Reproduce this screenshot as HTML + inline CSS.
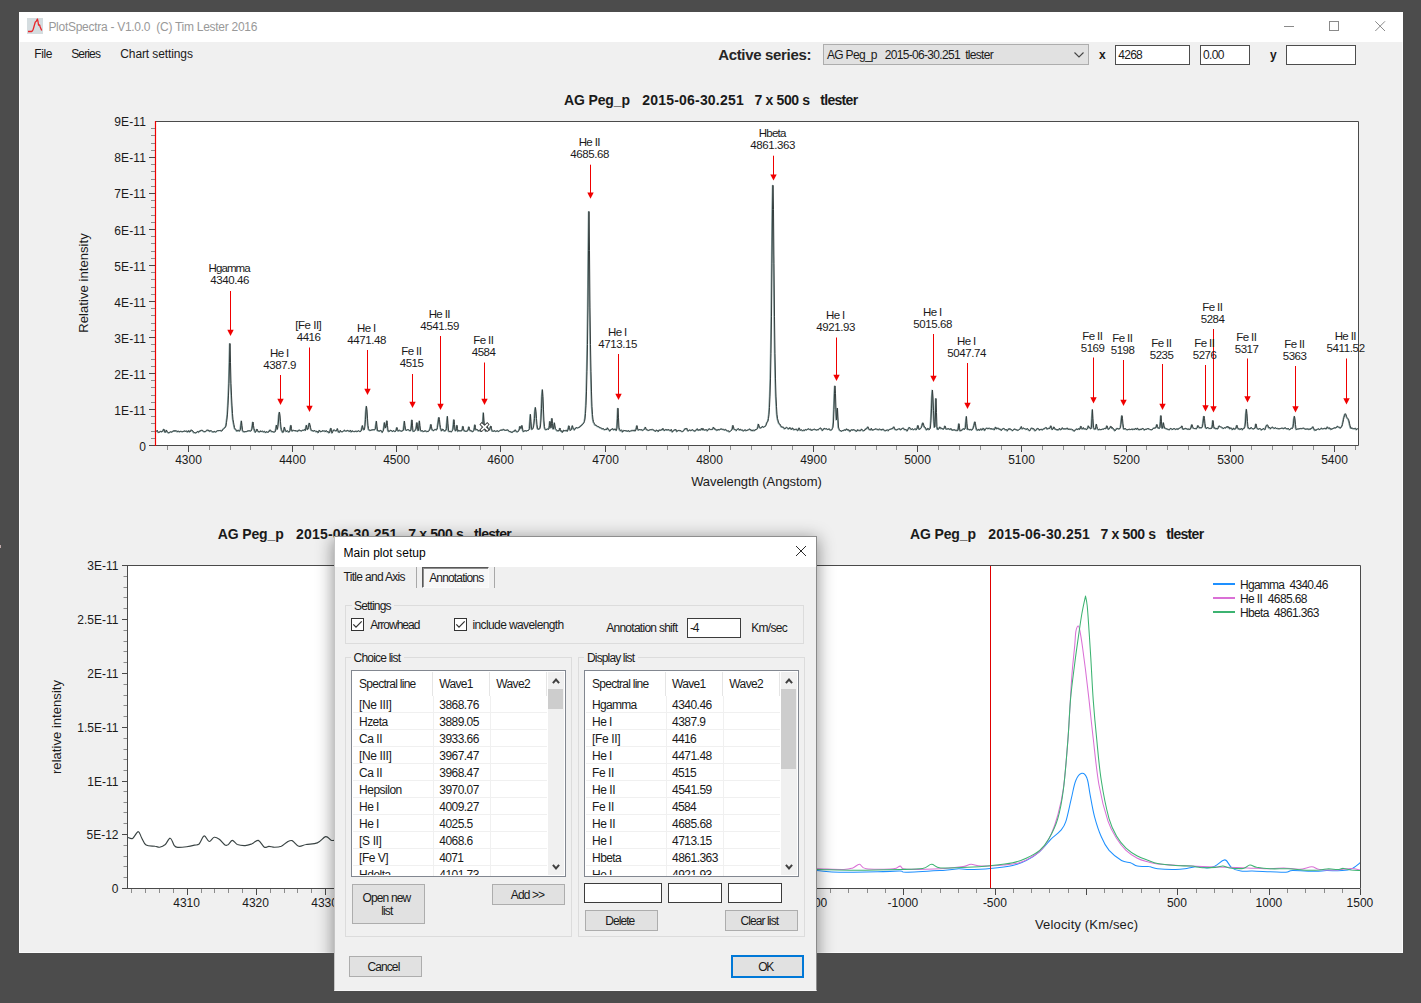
<!DOCTYPE html>
<html lang="en"><head><meta charset="utf-8"><title>PlotSpectra</title>
<style>
html,body{margin:0;padding:0}
body{width:1421px;height:1003px;position:relative;overflow:hidden;background:#4c4c4c;font-family:"Liberation Sans", sans-serif;color:#1a1a1a}
div,.abs{position:absolute}
.layer{left:0;top:0;width:1421px;height:1003px}
.t{position:absolute;white-space:pre;display:block}
svg{position:absolute;overflow:visible}
svg.chart{left:0;top:0;shape-rendering:auto}
</style></head>
<body>

<div class="layer" id="mainwin">
<div style="left:19px;top:12px;width:1384px;height:941px;background:#f0f0f0;border:1px solid #fafafa;border-top:0;box-sizing:border-box;"></div>
<div style="left:0px;top:545px;width:1px;height:3px;background:#bfa9a9;"></div>
<div style="left:19px;top:12px;width:1384px;height:30px;background:#fff;"></div>
<svg class="abs" style="left:27px;top:18px" width="16" height="16" viewBox="0 0 16 16"><rect width="16" height="16" fill="#d5dde0"/><path d="M1,13.5H4.5C6,13.3 6.3,11.5 7,8.5L8.3,4 9.3,3.3 10.4,1 11,3.5 11.5,7 12.6,6.8 13.2,9 14.7,12.5" fill="none" stroke="#e8262a" stroke-width="1.3" stroke-linejoin="round"/></svg>
<svg class="abs" style="left:1270px;top:12px" width="133" height="30" viewBox="1270 12 133 30" fill="none" stroke="#8a8a8a" stroke-width="1"><path d="M1284,26.5H1294"/><rect x="1329.5" y="21.5" width="9" height="9"/><path d="M1375.3,21.3L1385,31M1385,21.3L1375.3,31"/></svg>
<div style="left:823px;top:44px;width:266px;height:21px;background:#e1e1e1;border:1px solid #adadad;box-sizing:border-box;"></div>
<svg class="abs" style="left:1072px;top:49px" width="14" height="12" viewBox="0 0 14 12"><path d="M2.5,3.5L7,8L11.5,3.5" fill="none" stroke="#444" stroke-width="1.1"/></svg>
<div style="left:1115px;top:45px;width:75px;height:20px;background:#fff;border:1px solid #4d4d4d;box-sizing:border-box;"></div>
<div style="left:1200px;top:45px;width:50px;height:20px;background:#fff;border:1px solid #4d4d4d;box-sizing:border-box;"></div>
<div style="left:1286px;top:45px;width:70px;height:20px;background:#fff;border:1px solid #4d4d4d;box-sizing:border-box;"></div>
<span class="t" style="left:48.40px;top:20px;font-size:12px;line-height:15px;letter-spacing:-0.278px;color:#999999;">PlotSpectra - V1.0.0  (C) Tim Lester 2016</span>
<span class="t" style="left:34.30px;top:47px;font-size:12px;line-height:15px;letter-spacing:-0.415px;">File</span>
<span class="t" style="left:71.20px;top:47px;font-size:12px;line-height:15px;letter-spacing:-0.863px;">Series</span>
<span class="t" style="left:120.30px;top:47px;font-size:12px;line-height:15px;letter-spacing:-0.111px;">Chart settings</span>
<span class="t" style="left:718.20px;top:45px;font-size:15px;line-height:19px;font-weight:700;letter-spacing:-0.328px;color:#262626;">Active series:</span>
<span class="t" style="left:827.00px;top:48px;font-size:12px;line-height:15px;letter-spacing:-0.690px;">AG Peg_p   2015-06-30.251  tlester</span>
<span class="t" style="left:1099.00px;top:48px;font-size:12px;line-height:15px;font-weight:700;">x</span>
<span class="t" style="left:1270.00px;top:48px;font-size:12px;line-height:15px;font-weight:700;">y</span>
<span class="t" style="left:1118.30px;top:48px;font-size:12px;line-height:15px;letter-spacing:-0.734px;">4268</span>
<span class="t" style="left:1203.00px;top:48px;font-size:12px;line-height:15px;letter-spacing:-0.620px;">0.00</span>
<svg class="chart" width="1421" height="1003" viewBox="0 0 1421 1003">
<g id="mainplot"><rect x="155" y="121" width="1204" height="325" fill="#fff"/>
<path d="M149,445.5H155" stroke="#4a4a4a"/>
<path d="M151,438.5H155" stroke="#8c8c8c"/>
<path d="M151,431.5H155" stroke="#8c8c8c"/>
<path d="M151,423.5H155" stroke="#8c8c8c"/>
<path d="M151,416.5H155" stroke="#8c8c8c"/>
<path d="M149,409.5H155" stroke="#4a4a4a"/>
<path d="M151,402.5H155" stroke="#8c8c8c"/>
<path d="M151,395.5H155" stroke="#8c8c8c"/>
<path d="M151,387.5H155" stroke="#8c8c8c"/>
<path d="M151,380.5H155" stroke="#8c8c8c"/>
<path d="M149,373.5H155" stroke="#4a4a4a"/>
<path d="M151,366.5H155" stroke="#8c8c8c"/>
<path d="M151,359.5H155" stroke="#8c8c8c"/>
<path d="M151,351.5H155" stroke="#8c8c8c"/>
<path d="M151,344.5H155" stroke="#8c8c8c"/>
<path d="M149,337.5H155" stroke="#4a4a4a"/>
<path d="M151,330.5H155" stroke="#8c8c8c"/>
<path d="M151,323.5H155" stroke="#8c8c8c"/>
<path d="M151,315.5H155" stroke="#8c8c8c"/>
<path d="M151,308.5H155" stroke="#8c8c8c"/>
<path d="M149,301.5H155" stroke="#4a4a4a"/>
<path d="M151,294.5H155" stroke="#8c8c8c"/>
<path d="M151,287.5H155" stroke="#8c8c8c"/>
<path d="M151,279.5H155" stroke="#8c8c8c"/>
<path d="M151,272.5H155" stroke="#8c8c8c"/>
<path d="M149,265.5H155" stroke="#4a4a4a"/>
<path d="M151,258.5H155" stroke="#8c8c8c"/>
<path d="M151,251.5H155" stroke="#8c8c8c"/>
<path d="M151,243.5H155" stroke="#8c8c8c"/>
<path d="M151,236.5H155" stroke="#8c8c8c"/>
<path d="M149,229.5H155" stroke="#4a4a4a"/>
<path d="M151,222.5H155" stroke="#8c8c8c"/>
<path d="M151,215.5H155" stroke="#8c8c8c"/>
<path d="M151,207.5H155" stroke="#8c8c8c"/>
<path d="M151,200.5H155" stroke="#8c8c8c"/>
<path d="M149,193.5H155" stroke="#4a4a4a"/>
<path d="M151,186.5H155" stroke="#8c8c8c"/>
<path d="M151,179.5H155" stroke="#8c8c8c"/>
<path d="M151,171.5H155" stroke="#8c8c8c"/>
<path d="M151,164.5H155" stroke="#8c8c8c"/>
<path d="M149,157.5H155" stroke="#4a4a4a"/>
<path d="M151,150.5H155" stroke="#8c8c8c"/>
<path d="M151,143.5H155" stroke="#8c8c8c"/>
<path d="M151,135.5H155" stroke="#8c8c8c"/>
<path d="M151,128.5H155" stroke="#8c8c8c"/>
<path d="M167.5,446V450" stroke="#8c8c8c"/>
<path d="M188.5,446V452" stroke="#4a4a4a"/>
<path d="M209.5,446V450" stroke="#8c8c8c"/>
<path d="M230.5,446V450" stroke="#8c8c8c"/>
<path d="M250.5,446V450" stroke="#8c8c8c"/>
<path d="M271.5,446V450" stroke="#8c8c8c"/>
<path d="M292.5,446V452" stroke="#4a4a4a"/>
<path d="M313.5,446V450" stroke="#8c8c8c"/>
<path d="M334.5,446V450" stroke="#8c8c8c"/>
<path d="M355.5,446V450" stroke="#8c8c8c"/>
<path d="M375.5,446V450" stroke="#8c8c8c"/>
<path d="M396.5,446V452" stroke="#4a4a4a"/>
<path d="M417.5,446V450" stroke="#8c8c8c"/>
<path d="M438.5,446V450" stroke="#8c8c8c"/>
<path d="M459.5,446V450" stroke="#8c8c8c"/>
<path d="M480.5,446V450" stroke="#8c8c8c"/>
<path d="M500.5,446V452" stroke="#4a4a4a"/>
<path d="M521.5,446V450" stroke="#8c8c8c"/>
<path d="M542.5,446V450" stroke="#8c8c8c"/>
<path d="M563.5,446V450" stroke="#8c8c8c"/>
<path d="M584.5,446V450" stroke="#8c8c8c"/>
<path d="M605.5,446V452" stroke="#4a4a4a"/>
<path d="M625.5,446V450" stroke="#8c8c8c"/>
<path d="M646.5,446V450" stroke="#8c8c8c"/>
<path d="M667.5,446V450" stroke="#8c8c8c"/>
<path d="M688.5,446V450" stroke="#8c8c8c"/>
<path d="M709.5,446V452" stroke="#4a4a4a"/>
<path d="M730.5,446V450" stroke="#8c8c8c"/>
<path d="M751.5,446V450" stroke="#8c8c8c"/>
<path d="M771.5,446V450" stroke="#8c8c8c"/>
<path d="M792.5,446V450" stroke="#8c8c8c"/>
<path d="M813.5,446V452" stroke="#4a4a4a"/>
<path d="M834.5,446V450" stroke="#8c8c8c"/>
<path d="M855.5,446V450" stroke="#8c8c8c"/>
<path d="M876.5,446V450" stroke="#8c8c8c"/>
<path d="M896.5,446V450" stroke="#8c8c8c"/>
<path d="M917.5,446V452" stroke="#4a4a4a"/>
<path d="M938.5,446V450" stroke="#8c8c8c"/>
<path d="M959.5,446V450" stroke="#8c8c8c"/>
<path d="M980.5,446V450" stroke="#8c8c8c"/>
<path d="M1001.5,446V450" stroke="#8c8c8c"/>
<path d="M1021.5,446V452" stroke="#4a4a4a"/>
<path d="M1042.5,446V450" stroke="#8c8c8c"/>
<path d="M1063.5,446V450" stroke="#8c8c8c"/>
<path d="M1084.5,446V450" stroke="#8c8c8c"/>
<path d="M1105.5,446V450" stroke="#8c8c8c"/>
<path d="M1126.5,446V452" stroke="#4a4a4a"/>
<path d="M1146.5,446V450" stroke="#8c8c8c"/>
<path d="M1167.5,446V450" stroke="#8c8c8c"/>
<path d="M1188.5,446V450" stroke="#8c8c8c"/>
<path d="M1209.5,446V450" stroke="#8c8c8c"/>
<path d="M1230.5,446V452" stroke="#4a4a4a"/>
<path d="M1251.5,446V450" stroke="#8c8c8c"/>
<path d="M1272.5,446V450" stroke="#8c8c8c"/>
<path d="M1292.5,446V450" stroke="#8c8c8c"/>
<path d="M1313.5,446V450" stroke="#8c8c8c"/>
<path d="M1334.5,446V452" stroke="#4a4a4a"/>
<path d="M1355.5,446V450" stroke="#8c8c8c"/>
<path d="M155.0,431.1 155.5,431.4 156.0,431.4 156.5,431.2 157.0,430.7 157.5,430.5 158.0,431.8 158.5,432.4 159.0,432.3 159.5,432.1 160.0,431.9 160.5,431.4 161.0,431.1 161.5,431.6 162.0,431.9 162.5,431.3 163.0,430.6 163.5,429.7 164.0,429.1 164.5,430.9 165.0,432.1 165.5,432.2 166.0,431.4 166.5,430.0 167.0,431.3 167.5,432.0 168.0,432.1 168.5,432.7 169.0,433.0 169.5,432.7 170.0,432.2 170.5,431.7 171.0,431.8 171.5,432.0 172.0,432.1 172.5,431.8 173.0,431.2 173.5,430.8 174.0,431.1 174.5,431.1 175.0,430.4 175.5,430.9 176.0,431.1 176.5,430.8 177.0,431.4 177.5,431.7 178.0,431.0 178.5,431.2 179.0,431.5 179.5,431.6 180.0,431.9 180.5,431.4 181.0,431.0 181.5,431.4 182.0,431.6 182.5,431.6 183.0,431.7 183.5,431.5 184.0,431.0 184.5,430.9 185.0,431.2 185.5,431.3 186.0,431.1 186.5,431.0 187.0,431.1 187.5,431.8 188.0,431.9 188.5,430.9 189.0,430.6 189.5,431.5 190.0,432.0 190.5,431.4 191.0,430.1 191.5,429.9 192.0,430.6 192.5,430.6 193.0,431.0 193.5,432.0 194.0,432.6 194.5,432.5 195.0,432.6 195.5,432.8 196.0,432.9 196.5,432.6 197.0,432.2 197.5,431.6 198.0,431.3 198.5,431.9 199.0,432.3 199.5,431.5 200.0,430.7 200.5,430.8 201.0,430.8 201.5,430.2 202.0,430.3 202.5,430.4 203.0,430.6 203.5,431.3 204.0,431.6 204.5,431.5 205.0,431.9 205.5,431.6 206.0,431.2 206.5,430.9 207.0,430.2 207.5,429.9 208.0,430.5 208.5,430.3 209.0,430.3 209.5,431.1 210.0,431.4 210.5,430.8 211.0,430.4 211.5,430.9 212.0,431.3 212.5,431.7 213.0,432.0 213.5,431.8 214.0,431.8 214.5,431.4 215.0,431.5 215.5,432.0 216.0,432.1 216.5,431.7 217.0,431.1 217.5,430.6 218.0,430.6 218.5,430.6 219.0,430.4 219.5,430.5 220.0,430.5 220.5,430.4 221.0,430.6 221.5,430.9 222.0,431.0 222.5,430.4 223.0,429.3 223.5,428.8 224.0,428.6 224.5,428.2 225.0,427.3 225.5,427.1 226.0,426.0 226.5,422.7 227.0,419.0 227.5,414.1 228.0,405.9 228.5,395.1 229.0,383.4 229.5,362.3 230.0,343.5 230.5,362.3 231.0,383.4 231.5,395.1 232.0,405.1 232.5,413.5 233.0,419.3 233.5,422.1 234.0,424.7 234.5,427.4 235.0,428.9 235.5,429.0 236.0,429.6 236.5,430.5 237.0,431.1 237.5,430.9 238.0,430.1 238.5,430.1 239.0,430.6 239.5,431.1 240.0,430.7 240.5,429.4 241.0,425.2 241.5,420.9 242.0,425.4 242.5,429.8 243.0,431.1 243.5,431.7 244.0,431.6 244.5,431.7 245.0,431.9 245.5,431.5 246.0,431.4 246.5,431.6 247.0,431.3 247.5,431.0 248.0,431.2 248.5,430.8 249.0,430.6 249.5,430.7 250.0,430.8 250.5,431.0 251.0,430.9 251.5,430.5 252.0,428.9 252.5,425.1 253.0,422.0 253.5,425.4 254.0,428.4 254.5,430.2 255.0,431.7 255.5,432.1 256.0,431.7 256.5,430.4 257.0,429.1 257.5,429.9 258.0,431.3 258.5,431.6 259.0,431.4 259.5,431.9 260.0,432.0 260.5,431.1 261.0,430.8 261.5,431.5 262.0,431.4 262.5,431.1 263.0,431.4 263.5,431.8 264.0,431.7 264.5,431.3 265.0,431.7 265.5,432.4 266.0,432.3 266.5,431.7 267.0,431.7 267.5,432.3 268.0,432.0 268.5,431.9 269.0,431.9 269.5,430.8 270.0,429.9 270.5,430.1 271.0,430.6 271.5,431.4 272.0,431.7 272.5,431.5 273.0,431.6 273.5,431.9 274.0,431.9 274.5,431.9 275.0,431.7 275.5,431.4 276.0,428.7 276.5,425.2 277.0,427.4 277.5,429.3 278.0,426.6 278.5,421.0 279.0,414.8 279.5,412.1 280.0,415.1 280.5,421.7 281.0,427.1 281.5,429.7 282.0,430.8 282.5,431.8 283.0,432.4 283.5,431.8 284.0,429.4 284.5,427.1 285.0,428.9 285.5,430.7 286.0,431.4 286.5,431.5 287.0,430.8 287.5,430.7 288.0,431.4 288.5,431.8 289.0,431.8 289.5,431.9 290.0,430.8 290.5,427.2 291.0,425.3 291.5,428.4 292.0,431.0 292.5,430.9 293.0,430.5 293.5,430.3 294.0,430.4 294.5,430.5 295.0,430.7 295.5,430.7 296.0,430.5 296.5,431.0 297.0,431.0 297.5,431.0 298.0,431.4 298.5,430.9 299.0,429.9 299.5,430.1 300.0,430.5 300.5,430.5 301.0,430.8 301.5,430.9 302.0,430.7 302.5,430.3 303.0,430.0 303.5,430.4 304.0,429.9 304.5,429.5 305.0,430.2 305.5,430.4 306.0,427.5 306.5,425.3 307.0,427.8 307.5,429.4 308.0,429.3 308.5,427.6 309.0,424.2 309.5,423.0 310.0,424.8 310.5,427.2 311.0,429.3 311.5,430.3 312.0,430.3 312.5,430.5 313.0,431.0 313.5,431.1 314.0,430.7 314.5,430.5 315.0,430.5 315.5,431.0 316.0,431.6 316.5,431.4 317.0,431.0 317.5,431.7 318.0,432.6 318.5,432.4 319.0,431.1 319.5,430.2 320.0,430.7 320.5,431.5 321.0,431.8 321.5,431.5 322.0,431.2 322.5,430.9 323.0,430.5 323.5,431.0 324.0,431.0 324.5,430.8 325.0,431.4 325.5,431.5 326.0,430.7 326.5,430.7 327.0,431.4 327.5,431.6 328.0,431.4 328.5,431.8 329.0,432.8 329.5,432.6 330.0,431.2 330.5,429.3 331.0,428.2 331.5,430.8 332.0,432.9 332.5,432.7 333.0,431.4 333.5,430.1 334.0,429.8 334.5,430.0 335.0,430.3 335.5,430.7 336.0,430.7 336.5,430.9 337.0,429.8 337.5,428.6 338.0,430.3 338.5,431.8 339.0,432.1 339.5,432.3 340.0,431.7 340.5,430.4 341.0,431.1 341.5,431.7 342.0,431.7 342.5,431.7 343.0,431.4 343.5,431.2 344.0,430.6 344.5,430.2 345.0,430.5 345.5,431.1 346.0,431.0 346.5,430.9 347.0,430.9 347.5,430.4 348.0,430.3 348.5,430.8 349.0,431.2 349.5,431.4 350.0,430.9 350.5,430.2 351.0,431.0 351.5,432.0 352.0,431.5 352.5,430.8 353.0,430.9 353.5,431.4 354.0,431.5 354.5,431.4 355.0,431.6 355.5,431.3 356.0,431.0 356.5,431.2 357.0,431.6 357.5,431.5 358.0,431.1 358.5,430.6 359.0,430.9 359.5,431.3 360.0,431.5 360.5,431.4 361.0,431.2 361.5,430.2 362.0,427.7 362.5,425.6 363.0,427.8 363.5,429.3 364.0,429.9 364.5,429.5 365.0,426.2 365.5,419.4 366.0,411.1 366.5,406.3 367.0,409.8 367.5,418.2 368.0,425.2 368.5,428.7 369.0,429.8 369.5,430.1 370.0,430.5 370.5,430.4 371.0,430.2 371.5,430.0 372.0,429.9 372.5,429.8 373.0,429.5 373.5,429.6 374.0,429.8 374.5,429.7 375.0,429.6 375.5,428.8 376.0,424.9 376.5,421.2 377.0,426.1 377.5,430.5 378.0,430.7 378.5,430.6 379.0,431.2 379.5,431.2 380.0,430.5 380.5,430.4 381.0,430.4 381.5,430.8 382.0,431.9 382.5,432.3 383.0,431.1 383.5,430.5 384.0,427.1 384.5,422.6 385.0,425.1 385.5,427.9 386.0,426.9 386.5,423.9 387.0,420.8 387.5,425.5 388.0,430.0 388.5,431.2 389.0,431.6 389.5,431.3 390.0,430.6 390.5,430.3 391.0,430.4 391.5,430.5 392.0,431.0 392.5,431.4 393.0,431.2 393.5,430.6 394.0,430.7 394.5,431.3 395.0,431.5 395.5,431.4 396.0,430.9 396.5,429.1 397.0,427.5 397.5,429.3 398.0,430.8 398.5,430.9 399.0,430.5 399.5,430.0 400.0,430.4 400.5,430.9 401.0,430.8 401.5,431.1 402.0,431.1 402.5,430.7 403.0,430.7 403.5,430.2 404.0,425.9 404.5,421.2 405.0,425.4 405.5,429.4 406.0,430.1 406.5,430.2 407.0,430.2 407.5,429.7 408.0,429.5 408.5,429.6 409.0,430.1 409.5,430.4 410.0,430.7 410.5,430.8 411.0,430.0 411.5,425.0 412.0,419.9 412.5,425.2 413.0,430.6 413.5,431.3 414.0,431.2 414.5,431.2 415.0,430.7 415.5,429.7 416.0,429.1 416.5,425.9 417.0,422.6 417.5,426.8 418.0,430.5 418.5,430.4 419.0,425.8 419.5,420.9 420.0,425.6 420.5,430.1 421.0,430.8 421.5,430.8 422.0,430.9 422.5,430.7 423.0,431.1 423.5,431.7 424.0,431.1 424.5,431.0 425.0,431.2 425.5,430.9 426.0,430.7 426.5,431.1 427.0,431.6 427.5,431.5 428.0,431.1 428.5,431.3 429.0,430.8 429.5,430.1 430.0,429.1 430.5,426.8 431.0,424.4 431.5,426.8 432.0,429.2 432.5,430.0 433.0,430.1 433.5,430.5 434.0,430.6 434.5,429.8 435.0,429.3 435.5,429.4 436.0,429.6 436.5,429.8 437.0,429.6 437.5,427.7 438.0,424.0 438.5,419.8 439.0,417.4 439.5,419.6 440.0,424.3 440.5,427.5 441.0,429.2 441.5,430.6 442.0,430.7 442.5,429.4 443.0,429.0 443.5,429.7 444.0,430.6 444.5,430.8 445.0,430.8 445.5,430.8 446.0,430.3 446.5,428.6 447.0,422.7 447.5,416.4 448.0,423.3 448.5,430.2 449.0,431.5 449.5,431.4 450.0,431.4 450.5,431.3 451.0,431.4 451.5,431.7 452.0,431.4 452.5,430.6 453.0,429.3 453.5,424.4 454.0,419.7 454.5,424.5 455.0,429.4 455.5,430.6 456.0,430.8 456.5,428.4 457.0,425.3 457.5,428.5 458.0,431.3 458.5,430.6 459.0,430.3 459.5,430.7 460.0,430.8 460.5,430.8 461.0,430.7 461.5,430.7 462.0,430.6 462.5,428.6 463.0,426.3 463.5,428.2 464.0,430.5 464.5,430.7 465.0,431.0 465.5,431.2 466.0,431.1 466.5,431.2 467.0,431.2 467.5,430.8 468.0,430.5 468.5,428.6 469.0,426.8 469.5,428.7 470.0,430.5 470.5,430.6 471.0,430.8 471.5,431.0 472.0,430.8 472.5,431.4 473.0,431.7 473.5,431.1 474.0,430.3 474.5,427.5 475.0,424.8 475.5,427.7 476.0,429.8 476.5,429.2 477.0,429.7 477.5,429.8 478.0,429.9 478.5,430.8 479.0,430.9 479.5,430.3 480.0,430.8 480.5,431.1 481.0,431.3 481.5,431.1 482.0,430.7 482.5,429.8 483.0,421.9 483.5,412.8 484.0,420.1 484.5,427.8 485.0,429.3 485.5,430.5 486.0,431.3 486.5,430.8 487.0,428.6 487.5,426.6 488.0,428.1 488.5,429.9 489.0,430.4 489.5,429.9 490.0,428.5 490.5,427.0 491.0,426.0 491.5,428.3 492.0,430.3 492.5,431.1 493.0,431.2 493.5,431.2 494.0,431.0 494.5,430.7 495.0,430.7 495.5,431.3 496.0,431.5 496.5,431.1 497.0,431.0 497.5,430.8 498.0,430.9 498.5,431.4 499.0,431.4 499.5,430.8 500.0,430.5 500.5,430.3 501.0,429.9 501.5,430.0 502.0,430.2 502.5,430.1 503.0,429.5 503.5,429.2 504.0,429.8 504.5,430.0 505.0,430.0 505.5,430.3 506.0,430.1 506.5,430.1 507.0,430.2 507.5,429.9 508.0,429.8 508.5,430.2 509.0,431.1 509.5,431.5 510.0,431.5 510.5,431.4 511.0,431.9 511.5,432.2 512.0,432.1 512.5,432.3 513.0,431.7 513.5,431.2 514.0,431.4 514.5,431.2 515.0,430.1 515.5,429.9 516.0,430.8 516.5,431.4 517.0,431.7 517.5,432.0 518.0,431.4 518.5,431.0 519.0,430.7 519.5,428.7 520.0,426.4 520.5,427.7 521.0,428.5 521.5,426.6 522.0,425.5 522.5,427.9 523.0,430.6 523.5,431.6 524.0,431.2 524.5,430.9 525.0,430.9 525.5,430.6 526.0,430.7 526.5,431.0 527.0,430.8 527.5,430.5 528.0,430.5 528.5,430.4 529.0,429.9 529.5,428.7 530.0,421.9 530.5,414.4 531.0,421.2 531.5,428.5 532.0,429.4 532.5,428.8 533.0,428.7 533.5,427.3 534.0,424.0 534.5,418.6 535.0,411.2 535.5,407.5 536.0,411.2 536.5,418.5 537.0,424.5 537.5,428.1 538.0,429.1 538.5,429.1 539.0,429.1 539.5,429.0 540.0,428.3 540.5,426.0 541.0,420.1 541.5,408.8 542.0,396.4 542.5,389.7 543.0,396.4 543.5,409.9 544.0,420.9 544.5,426.7 545.0,428.7 545.5,429.4 546.0,429.8 546.5,429.6 547.0,429.3 547.5,428.8 548.0,429.0 548.5,429.3 549.0,429.0 549.5,425.5 550.0,421.4 550.5,424.7 551.0,427.8 551.5,423.6 552.0,418.4 552.5,423.6 553.0,428.8 553.5,429.0 554.0,425.9 554.5,422.8 555.0,426.0 555.5,428.8 556.0,429.4 556.5,429.8 557.0,430.3 557.5,430.9 558.0,430.7 558.5,430.6 559.0,430.9 559.5,429.8 560.0,428.1 560.5,429.6 561.0,431.2 561.5,431.0 562.0,431.1 562.5,432.3 563.0,431.9 563.5,430.3 564.0,430.1 564.5,430.6 565.0,430.6 565.5,430.7 566.0,430.3 566.5,430.2 567.0,431.0 567.5,431.2 568.0,429.9 568.5,427.8 569.0,425.8 569.5,427.5 570.0,429.7 570.5,430.3 571.0,430.1 571.5,429.3 572.0,427.3 572.5,425.7 573.0,427.3 573.5,428.8 574.0,429.4 574.5,429.8 575.0,429.5 575.5,428.1 576.0,428.0 576.5,427.6 577.0,427.5 577.5,428.0 578.0,427.9 578.5,427.6 579.0,427.4 579.5,427.0 580.0,427.1 580.5,426.4 581.0,425.5 581.5,425.7 582.0,425.2 582.5,424.1 583.0,423.9 583.5,423.6 584.0,422.7 584.5,421.6 585.0,419.0 585.5,413.6 586.0,405.8 586.5,391.9 587.0,371.3 587.5,344.5 588.0,307.9 588.5,250.3 589.0,211.5 589.5,250.3 590.0,307.9 590.5,344.5 591.0,371.3 591.5,391.9 592.0,406.6 592.5,414.6 593.0,419.2 593.5,421.7 594.0,422.7 594.5,423.5 595.0,424.7 595.5,425.1 596.0,425.1 596.5,425.3 597.0,425.8 597.5,426.4 598.0,426.5 598.5,426.5 599.0,427.0 599.5,427.3 600.0,427.3 600.5,427.8 601.0,427.8 601.5,428.0 602.0,428.7 602.5,428.8 603.0,428.6 603.5,428.6 604.0,429.1 604.5,429.7 605.0,429.7 605.5,429.4 606.0,429.1 606.5,429.5 607.0,429.2 607.5,427.9 608.0,428.3 608.5,429.4 609.0,429.6 609.5,430.1 610.0,431.1 610.5,430.3 611.0,429.4 611.5,429.4 612.0,429.2 612.5,428.9 613.0,428.6 613.5,429.3 614.0,430.0 614.5,429.4 615.0,428.8 615.5,429.2 616.0,430.2 616.5,430.3 617.0,428.2 617.5,418.3 618.0,408.2 618.5,417.8 619.0,427.2 619.5,429.4 620.0,430.3 620.5,430.7 621.0,430.3 621.5,429.8 622.0,430.5 622.5,431.8 623.0,431.8 623.5,430.8 624.0,430.2 624.5,430.5 625.0,430.5 625.5,430.6 626.0,430.8 626.5,430.8 627.0,430.9 627.5,431.1 628.0,431.1 628.5,430.7 629.0,430.7 629.5,431.4 630.0,431.4 630.5,430.9 631.0,431.0 631.5,430.9 632.0,430.3 632.5,430.2 633.0,430.7 633.5,430.7 634.0,430.1 634.5,430.0 635.0,430.9 635.5,430.8 636.0,429.7 636.5,427.7 637.0,425.6 637.5,427.9 638.0,429.7 638.5,430.0 639.0,429.9 639.5,429.5 640.0,429.5 640.5,429.7 641.0,429.7 641.5,429.7 642.0,429.7 642.5,430.2 643.0,430.5 643.5,430.0 644.0,429.3 644.5,429.2 645.0,428.4 645.5,427.1 646.0,428.4 646.5,429.5 647.0,429.6 647.5,429.9 648.0,430.2 648.5,430.4 649.0,430.3 649.5,430.0 650.0,429.7 650.5,429.6 651.0,429.6 651.5,429.7 652.0,429.5 652.5,429.2 653.0,429.7 653.5,430.0 654.0,430.0 654.5,430.4 655.0,430.8 655.5,431.2 656.0,431.1 656.5,430.2 657.0,429.9 657.5,430.4 658.0,431.3 658.5,431.4 659.0,430.1 659.5,430.0 660.0,430.4 660.5,430.3 661.0,429.9 661.5,429.6 662.0,430.0 662.5,429.5 663.0,428.4 663.5,429.2 664.0,430.2 664.5,430.4 665.0,430.4 665.5,429.7 666.0,429.2 666.5,429.6 667.0,430.2 667.5,430.0 668.0,429.5 668.5,429.6 669.0,429.9 669.5,430.0 670.0,430.5 670.5,430.7 671.0,429.7 671.5,429.6 672.0,430.9 672.5,431.9 673.0,431.6 673.5,430.9 674.0,430.1 674.5,429.9 675.0,430.0 675.5,429.7 676.0,429.4 676.5,430.4 677.0,431.6 677.5,431.0 678.0,430.4 678.5,430.4 679.0,430.4 679.5,430.4 680.0,430.6 680.5,430.5 681.0,430.6 681.5,431.3 682.0,431.5 682.5,431.6 683.0,431.3 683.5,430.9 684.0,430.6 684.5,429.7 685.0,428.6 685.5,428.6 686.0,429.0 686.5,428.7 687.0,428.3 687.5,429.7 688.0,430.9 688.5,430.8 689.0,430.4 689.5,430.1 690.0,429.9 690.5,430.3 691.0,430.6 691.5,430.4 692.0,429.8 692.5,429.6 693.0,430.1 693.5,430.3 694.0,430.7 694.5,430.9 695.0,431.3 695.5,431.0 696.0,430.3 696.5,429.6 697.0,429.0 697.5,428.8 698.0,430.0 698.5,430.3 699.0,429.7 699.5,429.7 700.0,429.9 700.5,430.2 701.0,429.6 701.5,428.5 702.0,429.4 702.5,429.7 703.0,428.3 703.5,429.5 704.0,430.0 704.5,430.0 705.0,429.9 705.5,429.8 706.0,429.7 706.5,429.6 707.0,430.1 707.5,430.8 708.0,430.4 708.5,429.4 709.0,428.8 709.5,428.9 710.0,429.1 710.5,429.4 711.0,429.4 711.5,429.4 712.0,429.5 712.5,429.4 713.0,428.5 713.5,427.2 714.0,427.7 714.5,428.9 715.0,429.3 715.5,429.1 716.0,429.3 716.5,430.1 717.0,430.5 717.5,430.2 718.0,429.4 718.5,429.4 719.0,430.0 719.5,430.0 720.0,429.4 720.5,429.1 721.0,429.0 721.5,428.9 722.0,429.1 722.5,429.3 723.0,429.4 723.5,429.3 724.0,429.6 724.5,430.0 725.0,429.6 725.5,429.3 726.0,429.9 726.5,430.2 727.0,430.4 727.5,431.0 728.0,431.0 728.5,430.8 729.0,431.2 729.5,431.8 730.0,431.6 730.5,431.0 731.0,430.6 731.5,430.3 732.0,429.9 732.5,428.0 733.0,425.4 733.5,426.6 734.0,428.7 734.5,429.4 735.0,429.5 735.5,429.6 736.0,430.2 736.5,430.6 737.0,429.8 737.5,429.2 738.0,428.9 738.5,428.6 739.0,429.1 739.5,430.0 740.0,429.9 740.5,429.2 741.0,429.5 741.5,430.1 742.0,430.0 742.5,430.0 743.0,430.4 743.5,430.9 744.0,430.9 744.5,430.3 745.0,429.6 745.5,429.9 746.0,430.6 746.5,430.6 747.0,430.1 747.5,430.1 748.0,430.2 748.5,429.9 749.0,429.4 749.5,429.1 750.0,429.0 750.5,429.4 751.0,430.3 751.5,430.3 752.0,430.0 752.5,430.7 753.0,430.4 753.5,429.8 754.0,430.4 754.5,430.9 755.0,430.4 755.5,429.5 756.0,429.4 756.5,429.4 757.0,429.1 757.5,428.7 758.0,426.7 758.5,424.0 759.0,425.4 759.5,427.3 760.0,427.9 760.5,427.9 761.0,427.9 761.5,427.7 762.0,427.1 762.5,426.4 763.0,426.6 763.5,427.2 764.0,427.2 764.5,426.6 765.0,426.4 765.5,426.2 766.0,425.3 766.5,424.2 767.0,422.6 767.5,422.0 768.0,421.0 768.5,418.5 769.0,414.8 769.5,407.5 770.0,396.1 770.5,378.9 771.0,353.7 771.5,316.2 772.0,263.8 772.5,209.7 773.0,185.3 773.5,209.7 774.0,263.8 774.5,316.2 775.0,353.7 775.5,378.9 776.0,396.1 776.5,406.3 777.0,414.2 777.5,418.3 778.0,420.1 778.5,421.9 779.0,423.4 779.5,423.8 780.0,424.1 780.5,425.1 781.0,426.0 781.5,426.8 782.0,427.0 782.5,427.1 783.0,426.9 783.5,427.1 784.0,427.9 784.5,428.6 785.0,428.8 785.5,428.5 786.0,427.7 786.5,427.3 787.0,427.6 787.5,427.8 788.0,428.3 788.5,428.9 789.0,429.0 789.5,428.2 790.0,427.5 790.5,428.2 791.0,429.0 791.5,429.3 792.0,429.0 792.5,428.0 793.0,428.2 793.5,429.2 794.0,429.8 794.5,429.6 795.0,429.3 795.5,429.3 796.0,429.5 796.5,429.2 797.0,429.5 797.5,430.3 798.0,430.6 798.5,429.7 799.0,427.9 799.5,428.2 800.0,429.6 800.5,430.3 801.0,429.9 801.5,429.6 802.0,430.2 802.5,430.7 803.0,430.5 803.5,430.1 804.0,430.2 804.5,430.6 805.0,430.0 805.5,429.4 806.0,429.8 806.5,429.9 807.0,429.7 807.5,429.4 808.0,429.0 808.5,428.8 809.0,428.9 809.5,429.4 810.0,429.4 810.5,429.0 811.0,429.8 811.5,430.2 812.0,429.8 812.5,429.9 813.0,430.0 813.5,429.6 814.0,429.1 814.5,429.1 815.0,429.5 815.5,429.5 816.0,429.9 816.5,430.0 817.0,429.9 817.5,429.7 818.0,429.5 818.5,429.7 819.0,429.3 819.5,428.6 820.0,428.3 820.5,428.0 821.0,428.1 821.5,429.1 822.0,429.6 822.5,430.4 823.0,430.3 823.5,429.3 824.0,428.5 824.5,428.4 825.0,428.5 825.5,429.0 826.0,428.7 826.5,428.6 827.0,429.0 827.5,429.4 828.0,429.5 828.5,429.2 829.0,428.9 829.5,429.0 830.0,429.4 830.5,430.1 831.0,430.3 831.5,430.0 832.0,429.5 832.5,428.6 833.0,427.3 833.5,422.0 834.0,409.6 834.5,393.7 835.0,385.9 835.5,393.7 836.0,409.2 836.5,419.8 837.0,416.3 837.5,408.2 838.0,418.0 838.5,427.0 839.0,428.5 839.5,429.6 840.0,430.5 840.5,430.5 841.0,430.8 841.5,431.2 842.0,430.9 842.5,430.5 843.0,430.7 843.5,430.6 844.0,430.0 844.5,429.8 845.0,429.9 845.5,430.1 846.0,430.1 846.5,429.1 847.0,428.8 847.5,429.5 848.0,430.2 848.5,430.0 849.0,429.7 849.5,430.5 850.0,431.5 850.5,431.1 851.0,430.2 851.5,429.7 852.0,429.7 852.5,430.0 853.0,430.1 853.5,429.7 854.0,429.5 854.5,429.9 855.0,430.2 855.5,430.4 856.0,430.8 856.5,431.3 857.0,431.1 857.5,430.0 858.0,429.6 858.5,430.3 859.0,430.3 859.5,430.3 860.0,430.7 860.5,430.7 861.0,430.1 861.5,429.2 862.0,429.2 862.5,429.8 863.0,430.6 863.5,430.9 864.0,430.4 864.5,430.4 865.0,430.2 865.5,429.0 866.0,428.7 866.5,428.7 867.0,428.4 867.5,427.4 868.0,426.8 868.5,428.1 869.0,429.2 869.5,429.4 870.0,429.8 870.5,430.0 871.0,429.2 871.5,428.4 872.0,429.8 872.5,430.0 873.0,429.7 873.5,429.8 874.0,429.7 874.5,429.5 875.0,429.2 875.5,429.0 876.0,428.6 876.5,428.9 877.0,429.4 877.5,429.3 878.0,429.6 878.5,429.8 879.0,429.4 879.5,429.0 880.0,429.4 880.5,429.7 881.0,429.2 881.5,429.5 882.0,430.1 882.5,429.6 883.0,428.9 883.5,429.3 884.0,429.9 884.5,430.3 885.0,430.7 885.5,430.7 886.0,430.3 886.5,430.3 887.0,430.2 887.5,429.7 888.0,430.4 888.5,430.7 889.0,429.8 889.5,429.4 890.0,429.5 890.5,429.2 891.0,429.1 891.5,428.7 892.0,428.9 892.5,428.7 893.0,428.1 893.5,427.3 894.0,426.8 894.5,428.4 895.0,429.3 895.5,429.3 896.0,429.7 896.5,429.8 897.0,429.7 897.5,429.6 898.0,429.3 898.5,428.8 899.0,429.0 899.5,429.0 900.0,428.7 900.5,429.2 901.0,429.9 901.5,429.2 902.0,428.5 902.5,428.4 903.0,428.2 903.5,428.0 904.0,428.7 904.5,429.5 905.0,429.7 905.5,429.5 906.0,429.3 906.5,429.8 907.0,430.8 907.5,430.8 908.0,429.6 908.5,428.6 909.0,427.8 909.5,427.2 910.0,427.8 910.5,428.9 911.0,429.4 911.5,429.4 912.0,429.0 912.5,428.7 913.0,429.1 913.5,429.7 914.0,429.6 914.5,429.2 915.0,428.7 915.5,428.9 916.0,429.6 916.5,429.6 917.0,428.9 917.5,427.2 918.0,425.4 918.5,427.1 919.0,429.1 919.5,429.2 920.0,429.1 920.5,428.7 921.0,428.0 921.5,427.5 922.0,425.8 922.5,423.6 923.0,422.8 923.5,423.9 924.0,425.8 924.5,427.1 925.0,427.0 925.5,427.7 926.0,429.0 926.5,429.7 927.0,429.8 927.5,429.2 928.0,428.2 928.5,429.2 929.0,429.6 929.5,429.5 930.0,429.0 930.5,427.0 931.0,420.8 931.5,408.9 932.0,397.0 932.5,390.0 933.0,397.0 933.5,410.4 934.0,421.4 934.5,427.2 935.0,426.9 935.5,413.0 936.0,398.5 936.5,412.6 937.0,426.7 937.5,429.1 938.0,429.2 938.5,429.3 939.0,428.7 939.5,427.5 940.0,426.9 940.5,428.1 941.0,428.6 941.5,428.2 942.0,428.2 942.5,428.6 943.0,428.9 943.5,429.1 944.0,428.8 944.5,427.6 945.0,425.9 945.5,426.8 946.0,428.7 946.5,429.2 947.0,429.0 947.5,428.9 948.0,428.7 948.5,428.6 949.0,429.0 949.5,429.2 950.0,429.4 950.5,429.2 951.0,428.5 951.5,429.0 952.0,430.0 952.5,430.1 953.0,429.9 953.5,429.9 954.0,429.7 954.5,429.7 955.0,429.9 955.5,430.2 956.0,430.3 956.5,430.2 957.0,430.4 957.5,430.6 958.0,430.3 958.5,427.0 959.0,423.7 959.5,427.2 960.0,430.7 960.5,430.7 961.0,430.3 961.5,430.2 962.0,430.4 962.5,429.8 963.0,429.0 963.5,428.6 964.0,429.1 964.5,429.3 965.0,429.0 965.5,427.5 966.0,421.7 966.5,416.5 967.0,423.3 967.5,429.2 968.0,429.3 968.5,429.2 969.0,429.2 969.5,429.7 970.0,429.8 970.5,429.3 971.0,429.4 971.5,429.9 972.0,430.1 972.5,429.6 973.0,428.7 973.5,427.4 974.0,425.5 974.5,423.2 975.0,421.8 975.5,423.7 976.0,427.1 976.5,429.1 977.0,429.8 977.5,430.3 978.0,429.9 978.5,429.3 979.0,429.4 979.5,430.2 980.0,430.2 980.5,429.3 981.0,428.7 981.5,429.3 982.0,430.1 982.5,429.6 983.0,428.6 983.5,428.1 984.0,428.8 984.5,430.1 985.0,430.4 985.5,429.5 986.0,428.7 986.5,428.2 987.0,427.9 987.5,428.3 988.0,428.7 988.5,428.6 989.0,428.0 989.5,428.0 990.0,428.5 990.5,428.7 991.0,429.0 991.5,428.8 992.0,428.6 992.5,429.1 993.0,429.1 993.5,428.8 994.0,429.5 994.5,429.7 995.0,428.8 995.5,427.3 996.0,427.2 996.5,428.5 997.0,428.9 997.5,428.3 998.0,427.9 998.5,428.1 999.0,428.9 999.5,429.2 1000.0,428.9 1000.5,429.1 1001.0,429.9 1001.5,430.3 1002.0,429.9 1002.5,429.1 1003.0,428.5 1003.5,428.4 1004.0,428.6 1004.5,428.8 1005.0,429.1 1005.5,429.8 1006.0,429.5 1006.5,429.5 1007.0,430.4 1007.5,430.8 1008.0,430.0 1008.5,429.1 1009.0,428.5 1009.5,428.9 1010.0,429.3 1010.5,429.1 1011.0,429.0 1011.5,429.7 1012.0,430.2 1012.5,430.5 1013.0,430.6 1013.5,430.0 1014.0,429.1 1014.5,429.1 1015.0,428.9 1015.5,429.3 1016.0,429.5 1016.5,429.7 1017.0,430.0 1017.5,430.1 1018.0,430.3 1018.5,430.2 1019.0,429.7 1019.5,429.3 1020.0,429.1 1020.5,428.7 1021.0,427.4 1021.5,426.6 1022.0,428.3 1022.5,428.9 1023.0,428.5 1023.5,428.1 1024.0,428.0 1024.5,428.5 1025.0,428.6 1025.5,428.8 1026.0,429.3 1026.5,429.3 1027.0,428.9 1027.5,428.4 1028.0,428.9 1028.5,429.8 1029.0,430.1 1029.5,430.5 1030.0,430.7 1030.5,429.8 1031.0,428.7 1031.5,428.1 1032.0,427.9 1032.5,428.2 1033.0,428.9 1033.5,428.8 1034.0,428.7 1034.5,429.4 1035.0,430.7 1035.5,430.7 1036.0,430.2 1036.5,429.8 1037.0,428.8 1037.5,428.4 1038.0,428.7 1038.5,428.8 1039.0,428.9 1039.5,429.8 1040.0,430.2 1040.5,429.5 1041.0,429.1 1041.5,429.3 1042.0,429.4 1042.5,429.9 1043.0,429.7 1043.5,428.8 1044.0,428.6 1044.5,428.7 1045.0,428.4 1045.5,427.8 1046.0,427.3 1046.5,427.7 1047.0,428.7 1047.5,429.2 1048.0,428.6 1048.5,428.1 1049.0,428.4 1049.5,428.5 1050.0,428.0 1050.5,426.8 1051.0,425.8 1051.5,427.7 1052.0,429.3 1052.5,429.5 1053.0,429.1 1053.5,427.9 1054.0,426.9 1054.5,428.1 1055.0,428.9 1055.5,429.1 1056.0,429.1 1056.5,429.3 1057.0,429.9 1057.5,429.7 1058.0,429.6 1058.5,430.1 1059.0,429.4 1059.5,428.5 1060.0,428.7 1060.5,429.4 1061.0,429.8 1061.5,429.4 1062.0,428.2 1062.5,427.9 1063.0,428.2 1063.5,428.9 1064.0,429.1 1064.5,428.8 1065.0,428.8 1065.5,428.8 1066.0,428.9 1066.5,428.8 1067.0,428.2 1067.5,428.0 1068.0,429.0 1068.5,429.3 1069.0,429.0 1069.5,429.1 1070.0,429.2 1070.5,429.3 1071.0,429.2 1071.5,429.0 1072.0,429.5 1072.5,429.7 1073.0,429.6 1073.5,430.4 1074.0,431.0 1074.5,430.9 1075.0,430.7 1075.5,430.0 1076.0,429.3 1076.5,429.0 1077.0,429.0 1077.5,429.4 1078.0,429.3 1078.5,428.8 1079.0,428.4 1079.5,429.3 1080.0,429.2 1080.5,427.4 1081.0,426.2 1081.5,427.6 1082.0,428.8 1082.5,429.0 1083.0,428.4 1083.5,427.6 1084.0,428.5 1084.5,429.0 1085.0,428.8 1085.5,428.8 1086.0,429.0 1086.5,429.4 1087.0,429.4 1087.5,428.9 1088.0,427.3 1088.5,425.8 1089.0,426.9 1089.5,427.8 1090.0,427.6 1090.5,428.0 1091.0,428.8 1091.5,427.6 1092.0,418.5 1092.5,409.6 1093.0,418.7 1093.5,427.4 1094.0,428.6 1094.5,428.8 1095.0,429.3 1095.5,429.0 1096.0,426.4 1096.5,424.2 1097.0,426.7 1097.5,428.6 1098.0,429.3 1098.5,429.7 1099.0,429.4 1099.5,429.2 1100.0,429.4 1100.5,429.6 1101.0,429.5 1101.5,429.5 1102.0,429.5 1102.5,429.0 1103.0,428.8 1103.5,429.1 1104.0,428.9 1104.5,428.5 1105.0,428.1 1105.5,428.3 1106.0,428.7 1106.5,427.6 1107.0,425.8 1107.5,427.1 1108.0,428.5 1108.5,429.1 1109.0,429.3 1109.5,428.5 1110.0,427.8 1110.5,427.0 1111.0,426.2 1111.5,427.6 1112.0,428.2 1112.5,427.5 1113.0,428.2 1113.5,429.0 1114.0,429.1 1114.5,430.0 1115.0,430.8 1115.5,430.4 1116.0,429.8 1116.5,429.0 1117.0,428.3 1117.5,428.4 1118.0,428.6 1118.5,428.8 1119.0,428.9 1119.5,428.7 1120.0,428.6 1120.5,427.7 1121.0,424.3 1121.5,419.0 1122.0,415.6 1122.5,418.3 1123.0,423.8 1123.5,427.6 1124.0,429.2 1124.5,429.0 1125.0,428.4 1125.5,428.6 1126.0,429.0 1126.5,429.4 1127.0,429.7 1127.5,429.7 1128.0,429.7 1128.5,429.5 1129.0,429.1 1129.5,429.2 1130.0,429.4 1130.5,429.5 1131.0,429.5 1131.5,429.3 1132.0,428.9 1132.5,429.2 1133.0,429.6 1133.5,429.0 1134.0,429.1 1134.5,429.4 1135.0,429.2 1135.5,428.4 1136.0,428.5 1136.5,429.3 1137.0,429.1 1137.5,428.2 1138.0,428.4 1138.5,429.5 1139.0,429.6 1139.5,429.3 1140.0,429.9 1140.5,429.5 1141.0,428.9 1141.5,429.4 1142.0,429.2 1142.5,428.4 1143.0,428.5 1143.5,428.7 1144.0,429.2 1144.5,429.9 1145.0,429.9 1145.5,429.2 1146.0,429.1 1146.5,429.3 1147.0,428.9 1147.5,428.6 1148.0,428.7 1148.5,428.7 1149.0,428.6 1149.5,429.1 1150.0,429.3 1150.5,429.5 1151.0,429.7 1151.5,429.7 1152.0,429.6 1152.5,429.5 1153.0,428.9 1153.5,428.2 1154.0,428.0 1154.5,428.1 1155.0,427.8 1155.5,427.8 1156.0,427.7 1156.5,426.1 1157.0,424.5 1157.5,426.3 1158.0,427.9 1158.5,428.0 1159.0,428.0 1159.5,428.3 1160.0,427.6 1160.5,421.5 1161.0,415.6 1161.5,421.9 1162.0,427.8 1162.5,428.2 1163.0,425.6 1163.5,422.7 1164.0,425.3 1164.5,428.0 1165.0,428.1 1165.5,428.2 1166.0,428.6 1166.5,428.7 1167.0,428.8 1167.5,429.1 1168.0,429.1 1168.5,429.4 1169.0,429.7 1169.5,429.7 1170.0,429.3 1170.5,428.5 1171.0,428.2 1171.5,428.7 1172.0,429.4 1172.5,429.5 1173.0,428.9 1173.5,428.8 1174.0,428.6 1174.5,428.5 1175.0,428.9 1175.5,429.3 1176.0,429.4 1176.5,429.1 1177.0,428.6 1177.5,429.0 1178.0,429.3 1178.5,429.0 1179.0,428.7 1179.5,428.2 1180.0,427.9 1180.5,427.6 1181.0,427.5 1181.5,427.2 1182.0,425.9 1182.5,427.7 1183.0,429.2 1183.5,429.2 1184.0,429.0 1184.5,428.7 1185.0,428.8 1185.5,428.6 1186.0,428.1 1186.5,428.6 1187.0,428.9 1187.5,429.1 1188.0,429.3 1188.5,429.0 1189.0,429.2 1189.5,429.3 1190.0,429.2 1190.5,429.1 1191.0,428.0 1191.5,426.0 1192.0,424.6 1192.5,426.1 1193.0,427.7 1193.5,428.0 1194.0,428.3 1194.5,428.5 1195.0,428.5 1195.5,428.4 1196.0,428.6 1196.5,428.7 1197.0,428.3 1197.5,427.0 1198.0,425.5 1198.5,426.0 1199.0,427.0 1199.5,427.8 1200.0,427.8 1200.5,427.6 1201.0,428.0 1201.5,427.7 1202.0,427.6 1202.5,426.8 1203.0,423.7 1203.5,418.9 1204.0,416.1 1204.5,418.3 1205.0,423.4 1205.5,427.0 1206.0,428.0 1206.5,428.4 1207.0,428.2 1207.5,427.5 1208.0,427.4 1208.5,428.0 1209.0,428.3 1209.5,428.4 1210.0,428.4 1210.5,428.4 1211.0,428.2 1211.5,428.3 1212.0,428.1 1212.5,424.6 1213.0,420.5 1213.5,423.9 1214.0,427.7 1214.5,428.0 1215.0,427.6 1215.5,428.4 1216.0,428.8 1216.5,428.5 1217.0,428.2 1217.5,428.8 1218.0,428.8 1218.5,427.4 1219.0,426.0 1219.5,426.0 1220.0,426.3 1220.5,426.8 1221.0,427.0 1221.5,426.9 1222.0,427.4 1222.5,427.9 1223.0,428.1 1223.5,428.5 1224.0,428.2 1224.5,427.6 1225.0,427.7 1225.5,427.9 1226.0,427.7 1226.5,427.3 1227.0,426.5 1227.5,426.5 1228.0,427.5 1228.5,427.2 1229.0,426.8 1229.5,428.0 1230.0,428.8 1230.5,428.2 1231.0,427.7 1231.5,428.2 1232.0,429.0 1232.5,429.6 1233.0,429.3 1233.5,428.2 1234.0,428.3 1234.5,429.1 1235.0,429.3 1235.5,429.0 1236.0,428.3 1236.5,426.4 1237.0,425.3 1237.5,426.8 1238.0,428.4 1238.5,428.8 1239.0,428.5 1239.5,428.8 1240.0,429.5 1240.5,429.3 1241.0,428.8 1241.5,428.2 1242.0,428.7 1242.5,429.7 1243.0,429.4 1243.5,428.4 1244.0,428.2 1244.5,428.2 1245.0,426.6 1245.5,422.0 1246.0,413.9 1246.5,409.3 1247.0,413.7 1247.5,421.7 1248.0,426.6 1248.5,428.1 1249.0,428.3 1249.5,428.5 1250.0,428.9 1250.5,428.6 1251.0,427.5 1251.5,427.6 1252.0,428.2 1252.5,428.5 1253.0,428.9 1253.5,428.9 1254.0,428.6 1254.5,428.5 1255.0,428.4 1255.5,426.3 1256.0,423.9 1256.5,425.9 1257.0,427.9 1257.5,428.4 1258.0,429.0 1258.5,429.2 1259.0,428.9 1259.5,428.6 1260.0,428.5 1260.5,428.7 1261.0,429.2 1261.5,429.9 1262.0,430.0 1262.5,429.2 1263.0,428.7 1263.5,428.6 1264.0,428.6 1264.5,429.2 1265.0,429.7 1265.5,428.6 1266.0,426.8 1266.5,425.6 1267.0,424.9 1267.5,424.9 1268.0,425.6 1268.5,427.0 1269.0,427.9 1269.5,427.5 1270.0,427.6 1270.5,428.7 1271.0,428.6 1271.5,427.7 1272.0,427.2 1272.5,427.1 1273.0,427.2 1273.5,427.8 1274.0,428.4 1274.5,428.4 1275.0,427.9 1275.5,427.6 1276.0,428.1 1276.5,428.5 1277.0,428.1 1277.5,428.2 1278.0,428.7 1278.5,428.7 1279.0,428.7 1279.5,428.7 1280.0,428.6 1280.5,428.5 1281.0,428.4 1281.5,428.2 1282.0,428.1 1282.5,428.2 1283.0,428.2 1283.5,428.4 1284.0,428.7 1284.5,428.3 1285.0,427.6 1285.5,427.9 1286.0,428.3 1286.5,428.6 1287.0,428.7 1287.5,428.8 1288.0,428.5 1288.5,428.5 1289.0,429.2 1289.5,429.6 1290.0,429.4 1290.5,429.1 1291.0,428.8 1291.5,428.2 1292.0,428.0 1292.5,428.4 1293.0,427.4 1293.5,423.8 1294.0,418.9 1294.5,416.3 1295.0,418.8 1295.5,424.5 1296.0,428.5 1296.5,429.5 1297.0,429.2 1297.5,429.0 1298.0,429.0 1298.5,428.9 1299.0,428.7 1299.5,428.6 1300.0,428.8 1300.5,428.4 1301.0,428.4 1301.5,428.6 1302.0,428.4 1302.5,428.3 1303.0,428.5 1303.5,428.2 1304.0,428.0 1304.5,428.3 1305.0,428.8 1305.5,429.2 1306.0,429.0 1306.5,429.0 1307.0,428.9 1307.5,428.9 1308.0,428.9 1308.5,429.1 1309.0,429.4 1309.5,429.3 1310.0,428.7 1310.5,428.9 1311.0,429.1 1311.5,428.6 1312.0,428.1 1312.5,427.3 1313.0,426.7 1313.5,427.7 1314.0,429.0 1314.5,429.7 1315.0,430.4 1315.5,430.1 1316.0,429.7 1316.5,429.9 1317.0,429.7 1317.5,429.2 1318.0,429.1 1318.5,428.8 1319.0,428.9 1319.5,429.5 1320.0,429.5 1320.5,429.1 1321.0,428.5 1321.5,428.2 1322.0,428.4 1322.5,428.9 1323.0,428.8 1323.5,428.6 1324.0,428.6 1324.5,428.4 1325.0,428.2 1325.5,428.4 1326.0,429.0 1326.5,428.8 1327.0,427.6 1327.5,426.8 1328.0,427.6 1328.5,428.2 1329.0,428.5 1329.5,428.2 1330.0,427.8 1330.5,428.7 1331.0,429.5 1331.5,429.1 1332.0,428.7 1332.5,428.7 1333.0,428.7 1333.5,428.3 1334.0,428.1 1334.5,427.8 1335.0,427.7 1335.5,427.9 1336.0,427.7 1336.5,427.5 1337.0,427.0 1337.5,426.2 1338.0,426.6 1338.5,427.1 1339.0,426.7 1339.5,427.1 1340.0,427.8 1340.5,427.9 1341.0,427.7 1341.5,427.0 1342.0,426.0 1342.5,424.7 1343.0,422.3 1343.5,419.7 1344.0,417.5 1344.5,415.6 1345.0,414.2 1345.5,413.7 1346.0,414.6 1346.5,416.2 1347.0,417.4 1347.5,418.1 1348.0,418.6 1348.5,419.3 1349.0,420.9 1349.5,423.2 1350.0,425.3 1350.5,427.0 1351.0,428.2 1351.5,428.2 1352.0,427.8 1352.5,428.2 1353.0,428.6 1353.5,428.6 1354.0,428.7 1354.5,428.7 1355.0,428.5 1355.5,428.2 1356.0,428.8 1356.5,429.6 1357.0,429.5 1357.5,428.7 1358.0,428.2" fill="none" stroke="#8aa3a3" stroke-width="1.3" stroke-linejoin="round" transform="translate(-0.55,0.2)"/>
<path d="M155.0,431.1 155.5,431.4 156.0,431.4 156.5,431.2 157.0,430.7 157.5,430.5 158.0,431.8 158.5,432.4 159.0,432.3 159.5,432.1 160.0,431.9 160.5,431.4 161.0,431.1 161.5,431.6 162.0,431.9 162.5,431.3 163.0,430.6 163.5,429.7 164.0,429.1 164.5,430.9 165.0,432.1 165.5,432.2 166.0,431.4 166.5,430.0 167.0,431.3 167.5,432.0 168.0,432.1 168.5,432.7 169.0,433.0 169.5,432.7 170.0,432.2 170.5,431.7 171.0,431.8 171.5,432.0 172.0,432.1 172.5,431.8 173.0,431.2 173.5,430.8 174.0,431.1 174.5,431.1 175.0,430.4 175.5,430.9 176.0,431.1 176.5,430.8 177.0,431.4 177.5,431.7 178.0,431.0 178.5,431.2 179.0,431.5 179.5,431.6 180.0,431.9 180.5,431.4 181.0,431.0 181.5,431.4 182.0,431.6 182.5,431.6 183.0,431.7 183.5,431.5 184.0,431.0 184.5,430.9 185.0,431.2 185.5,431.3 186.0,431.1 186.5,431.0 187.0,431.1 187.5,431.8 188.0,431.9 188.5,430.9 189.0,430.6 189.5,431.5 190.0,432.0 190.5,431.4 191.0,430.1 191.5,429.9 192.0,430.6 192.5,430.6 193.0,431.0 193.5,432.0 194.0,432.6 194.5,432.5 195.0,432.6 195.5,432.8 196.0,432.9 196.5,432.6 197.0,432.2 197.5,431.6 198.0,431.3 198.5,431.9 199.0,432.3 199.5,431.5 200.0,430.7 200.5,430.8 201.0,430.8 201.5,430.2 202.0,430.3 202.5,430.4 203.0,430.6 203.5,431.3 204.0,431.6 204.5,431.5 205.0,431.9 205.5,431.6 206.0,431.2 206.5,430.9 207.0,430.2 207.5,429.9 208.0,430.5 208.5,430.3 209.0,430.3 209.5,431.1 210.0,431.4 210.5,430.8 211.0,430.4 211.5,430.9 212.0,431.3 212.5,431.7 213.0,432.0 213.5,431.8 214.0,431.8 214.5,431.4 215.0,431.5 215.5,432.0 216.0,432.1 216.5,431.7 217.0,431.1 217.5,430.6 218.0,430.6 218.5,430.6 219.0,430.4 219.5,430.5 220.0,430.5 220.5,430.4 221.0,430.6 221.5,430.9 222.0,431.0 222.5,430.4 223.0,429.3 223.5,428.8 224.0,428.6 224.5,428.2 225.0,427.3 225.5,427.1 226.0,426.0 226.5,422.7 227.0,419.0 227.5,414.1 228.0,405.9 228.5,395.1 229.0,383.4 229.5,362.3 230.0,343.5 230.5,362.3 231.0,383.4 231.5,395.1 232.0,405.1 232.5,413.5 233.0,419.3 233.5,422.1 234.0,424.7 234.5,427.4 235.0,428.9 235.5,429.0 236.0,429.6 236.5,430.5 237.0,431.1 237.5,430.9 238.0,430.1 238.5,430.1 239.0,430.6 239.5,431.1 240.0,430.7 240.5,429.4 241.0,425.2 241.5,420.9 242.0,425.4 242.5,429.8 243.0,431.1 243.5,431.7 244.0,431.6 244.5,431.7 245.0,431.9 245.5,431.5 246.0,431.4 246.5,431.6 247.0,431.3 247.5,431.0 248.0,431.2 248.5,430.8 249.0,430.6 249.5,430.7 250.0,430.8 250.5,431.0 251.0,430.9 251.5,430.5 252.0,428.9 252.5,425.1 253.0,422.0 253.5,425.4 254.0,428.4 254.5,430.2 255.0,431.7 255.5,432.1 256.0,431.7 256.5,430.4 257.0,429.1 257.5,429.9 258.0,431.3 258.5,431.6 259.0,431.4 259.5,431.9 260.0,432.0 260.5,431.1 261.0,430.8 261.5,431.5 262.0,431.4 262.5,431.1 263.0,431.4 263.5,431.8 264.0,431.7 264.5,431.3 265.0,431.7 265.5,432.4 266.0,432.3 266.5,431.7 267.0,431.7 267.5,432.3 268.0,432.0 268.5,431.9 269.0,431.9 269.5,430.8 270.0,429.9 270.5,430.1 271.0,430.6 271.5,431.4 272.0,431.7 272.5,431.5 273.0,431.6 273.5,431.9 274.0,431.9 274.5,431.9 275.0,431.7 275.5,431.4 276.0,428.7 276.5,425.2 277.0,427.4 277.5,429.3 278.0,426.6 278.5,421.0 279.0,414.8 279.5,412.1 280.0,415.1 280.5,421.7 281.0,427.1 281.5,429.7 282.0,430.8 282.5,431.8 283.0,432.4 283.5,431.8 284.0,429.4 284.5,427.1 285.0,428.9 285.5,430.7 286.0,431.4 286.5,431.5 287.0,430.8 287.5,430.7 288.0,431.4 288.5,431.8 289.0,431.8 289.5,431.9 290.0,430.8 290.5,427.2 291.0,425.3 291.5,428.4 292.0,431.0 292.5,430.9 293.0,430.5 293.5,430.3 294.0,430.4 294.5,430.5 295.0,430.7 295.5,430.7 296.0,430.5 296.5,431.0 297.0,431.0 297.5,431.0 298.0,431.4 298.5,430.9 299.0,429.9 299.5,430.1 300.0,430.5 300.5,430.5 301.0,430.8 301.5,430.9 302.0,430.7 302.5,430.3 303.0,430.0 303.5,430.4 304.0,429.9 304.5,429.5 305.0,430.2 305.5,430.4 306.0,427.5 306.5,425.3 307.0,427.8 307.5,429.4 308.0,429.3 308.5,427.6 309.0,424.2 309.5,423.0 310.0,424.8 310.5,427.2 311.0,429.3 311.5,430.3 312.0,430.3 312.5,430.5 313.0,431.0 313.5,431.1 314.0,430.7 314.5,430.5 315.0,430.5 315.5,431.0 316.0,431.6 316.5,431.4 317.0,431.0 317.5,431.7 318.0,432.6 318.5,432.4 319.0,431.1 319.5,430.2 320.0,430.7 320.5,431.5 321.0,431.8 321.5,431.5 322.0,431.2 322.5,430.9 323.0,430.5 323.5,431.0 324.0,431.0 324.5,430.8 325.0,431.4 325.5,431.5 326.0,430.7 326.5,430.7 327.0,431.4 327.5,431.6 328.0,431.4 328.5,431.8 329.0,432.8 329.5,432.6 330.0,431.2 330.5,429.3 331.0,428.2 331.5,430.8 332.0,432.9 332.5,432.7 333.0,431.4 333.5,430.1 334.0,429.8 334.5,430.0 335.0,430.3 335.5,430.7 336.0,430.7 336.5,430.9 337.0,429.8 337.5,428.6 338.0,430.3 338.5,431.8 339.0,432.1 339.5,432.3 340.0,431.7 340.5,430.4 341.0,431.1 341.5,431.7 342.0,431.7 342.5,431.7 343.0,431.4 343.5,431.2 344.0,430.6 344.5,430.2 345.0,430.5 345.5,431.1 346.0,431.0 346.5,430.9 347.0,430.9 347.5,430.4 348.0,430.3 348.5,430.8 349.0,431.2 349.5,431.4 350.0,430.9 350.5,430.2 351.0,431.0 351.5,432.0 352.0,431.5 352.5,430.8 353.0,430.9 353.5,431.4 354.0,431.5 354.5,431.4 355.0,431.6 355.5,431.3 356.0,431.0 356.5,431.2 357.0,431.6 357.5,431.5 358.0,431.1 358.5,430.6 359.0,430.9 359.5,431.3 360.0,431.5 360.5,431.4 361.0,431.2 361.5,430.2 362.0,427.7 362.5,425.6 363.0,427.8 363.5,429.3 364.0,429.9 364.5,429.5 365.0,426.2 365.5,419.4 366.0,411.1 366.5,406.3 367.0,409.8 367.5,418.2 368.0,425.2 368.5,428.7 369.0,429.8 369.5,430.1 370.0,430.5 370.5,430.4 371.0,430.2 371.5,430.0 372.0,429.9 372.5,429.8 373.0,429.5 373.5,429.6 374.0,429.8 374.5,429.7 375.0,429.6 375.5,428.8 376.0,424.9 376.5,421.2 377.0,426.1 377.5,430.5 378.0,430.7 378.5,430.6 379.0,431.2 379.5,431.2 380.0,430.5 380.5,430.4 381.0,430.4 381.5,430.8 382.0,431.9 382.5,432.3 383.0,431.1 383.5,430.5 384.0,427.1 384.5,422.6 385.0,425.1 385.5,427.9 386.0,426.9 386.5,423.9 387.0,420.8 387.5,425.5 388.0,430.0 388.5,431.2 389.0,431.6 389.5,431.3 390.0,430.6 390.5,430.3 391.0,430.4 391.5,430.5 392.0,431.0 392.5,431.4 393.0,431.2 393.5,430.6 394.0,430.7 394.5,431.3 395.0,431.5 395.5,431.4 396.0,430.9 396.5,429.1 397.0,427.5 397.5,429.3 398.0,430.8 398.5,430.9 399.0,430.5 399.5,430.0 400.0,430.4 400.5,430.9 401.0,430.8 401.5,431.1 402.0,431.1 402.5,430.7 403.0,430.7 403.5,430.2 404.0,425.9 404.5,421.2 405.0,425.4 405.5,429.4 406.0,430.1 406.5,430.2 407.0,430.2 407.5,429.7 408.0,429.5 408.5,429.6 409.0,430.1 409.5,430.4 410.0,430.7 410.5,430.8 411.0,430.0 411.5,425.0 412.0,419.9 412.5,425.2 413.0,430.6 413.5,431.3 414.0,431.2 414.5,431.2 415.0,430.7 415.5,429.7 416.0,429.1 416.5,425.9 417.0,422.6 417.5,426.8 418.0,430.5 418.5,430.4 419.0,425.8 419.5,420.9 420.0,425.6 420.5,430.1 421.0,430.8 421.5,430.8 422.0,430.9 422.5,430.7 423.0,431.1 423.5,431.7 424.0,431.1 424.5,431.0 425.0,431.2 425.5,430.9 426.0,430.7 426.5,431.1 427.0,431.6 427.5,431.5 428.0,431.1 428.5,431.3 429.0,430.8 429.5,430.1 430.0,429.1 430.5,426.8 431.0,424.4 431.5,426.8 432.0,429.2 432.5,430.0 433.0,430.1 433.5,430.5 434.0,430.6 434.5,429.8 435.0,429.3 435.5,429.4 436.0,429.6 436.5,429.8 437.0,429.6 437.5,427.7 438.0,424.0 438.5,419.8 439.0,417.4 439.5,419.6 440.0,424.3 440.5,427.5 441.0,429.2 441.5,430.6 442.0,430.7 442.5,429.4 443.0,429.0 443.5,429.7 444.0,430.6 444.5,430.8 445.0,430.8 445.5,430.8 446.0,430.3 446.5,428.6 447.0,422.7 447.5,416.4 448.0,423.3 448.5,430.2 449.0,431.5 449.5,431.4 450.0,431.4 450.5,431.3 451.0,431.4 451.5,431.7 452.0,431.4 452.5,430.6 453.0,429.3 453.5,424.4 454.0,419.7 454.5,424.5 455.0,429.4 455.5,430.6 456.0,430.8 456.5,428.4 457.0,425.3 457.5,428.5 458.0,431.3 458.5,430.6 459.0,430.3 459.5,430.7 460.0,430.8 460.5,430.8 461.0,430.7 461.5,430.7 462.0,430.6 462.5,428.6 463.0,426.3 463.5,428.2 464.0,430.5 464.5,430.7 465.0,431.0 465.5,431.2 466.0,431.1 466.5,431.2 467.0,431.2 467.5,430.8 468.0,430.5 468.5,428.6 469.0,426.8 469.5,428.7 470.0,430.5 470.5,430.6 471.0,430.8 471.5,431.0 472.0,430.8 472.5,431.4 473.0,431.7 473.5,431.1 474.0,430.3 474.5,427.5 475.0,424.8 475.5,427.7 476.0,429.8 476.5,429.2 477.0,429.7 477.5,429.8 478.0,429.9 478.5,430.8 479.0,430.9 479.5,430.3 480.0,430.8 480.5,431.1 481.0,431.3 481.5,431.1 482.0,430.7 482.5,429.8 483.0,421.9 483.5,412.8 484.0,420.1 484.5,427.8 485.0,429.3 485.5,430.5 486.0,431.3 486.5,430.8 487.0,428.6 487.5,426.6 488.0,428.1 488.5,429.9 489.0,430.4 489.5,429.9 490.0,428.5 490.5,427.0 491.0,426.0 491.5,428.3 492.0,430.3 492.5,431.1 493.0,431.2 493.5,431.2 494.0,431.0 494.5,430.7 495.0,430.7 495.5,431.3 496.0,431.5 496.5,431.1 497.0,431.0 497.5,430.8 498.0,430.9 498.5,431.4 499.0,431.4 499.5,430.8 500.0,430.5 500.5,430.3 501.0,429.9 501.5,430.0 502.0,430.2 502.5,430.1 503.0,429.5 503.5,429.2 504.0,429.8 504.5,430.0 505.0,430.0 505.5,430.3 506.0,430.1 506.5,430.1 507.0,430.2 507.5,429.9 508.0,429.8 508.5,430.2 509.0,431.1 509.5,431.5 510.0,431.5 510.5,431.4 511.0,431.9 511.5,432.2 512.0,432.1 512.5,432.3 513.0,431.7 513.5,431.2 514.0,431.4 514.5,431.2 515.0,430.1 515.5,429.9 516.0,430.8 516.5,431.4 517.0,431.7 517.5,432.0 518.0,431.4 518.5,431.0 519.0,430.7 519.5,428.7 520.0,426.4 520.5,427.7 521.0,428.5 521.5,426.6 522.0,425.5 522.5,427.9 523.0,430.6 523.5,431.6 524.0,431.2 524.5,430.9 525.0,430.9 525.5,430.6 526.0,430.7 526.5,431.0 527.0,430.8 527.5,430.5 528.0,430.5 528.5,430.4 529.0,429.9 529.5,428.7 530.0,421.9 530.5,414.4 531.0,421.2 531.5,428.5 532.0,429.4 532.5,428.8 533.0,428.7 533.5,427.3 534.0,424.0 534.5,418.6 535.0,411.2 535.5,407.5 536.0,411.2 536.5,418.5 537.0,424.5 537.5,428.1 538.0,429.1 538.5,429.1 539.0,429.1 539.5,429.0 540.0,428.3 540.5,426.0 541.0,420.1 541.5,408.8 542.0,396.4 542.5,389.7 543.0,396.4 543.5,409.9 544.0,420.9 544.5,426.7 545.0,428.7 545.5,429.4 546.0,429.8 546.5,429.6 547.0,429.3 547.5,428.8 548.0,429.0 548.5,429.3 549.0,429.0 549.5,425.5 550.0,421.4 550.5,424.7 551.0,427.8 551.5,423.6 552.0,418.4 552.5,423.6 553.0,428.8 553.5,429.0 554.0,425.9 554.5,422.8 555.0,426.0 555.5,428.8 556.0,429.4 556.5,429.8 557.0,430.3 557.5,430.9 558.0,430.7 558.5,430.6 559.0,430.9 559.5,429.8 560.0,428.1 560.5,429.6 561.0,431.2 561.5,431.0 562.0,431.1 562.5,432.3 563.0,431.9 563.5,430.3 564.0,430.1 564.5,430.6 565.0,430.6 565.5,430.7 566.0,430.3 566.5,430.2 567.0,431.0 567.5,431.2 568.0,429.9 568.5,427.8 569.0,425.8 569.5,427.5 570.0,429.7 570.5,430.3 571.0,430.1 571.5,429.3 572.0,427.3 572.5,425.7 573.0,427.3 573.5,428.8 574.0,429.4 574.5,429.8 575.0,429.5 575.5,428.1 576.0,428.0 576.5,427.6 577.0,427.5 577.5,428.0 578.0,427.9 578.5,427.6 579.0,427.4 579.5,427.0 580.0,427.1 580.5,426.4 581.0,425.5 581.5,425.7 582.0,425.2 582.5,424.1 583.0,423.9 583.5,423.6 584.0,422.7 584.5,421.6 585.0,419.0 585.5,413.6 586.0,405.8 586.5,391.9 587.0,371.3 587.5,344.5 588.0,307.9 588.5,250.3 589.0,211.5 589.5,250.3 590.0,307.9 590.5,344.5 591.0,371.3 591.5,391.9 592.0,406.6 592.5,414.6 593.0,419.2 593.5,421.7 594.0,422.7 594.5,423.5 595.0,424.7 595.5,425.1 596.0,425.1 596.5,425.3 597.0,425.8 597.5,426.4 598.0,426.5 598.5,426.5 599.0,427.0 599.5,427.3 600.0,427.3 600.5,427.8 601.0,427.8 601.5,428.0 602.0,428.7 602.5,428.8 603.0,428.6 603.5,428.6 604.0,429.1 604.5,429.7 605.0,429.7 605.5,429.4 606.0,429.1 606.5,429.5 607.0,429.2 607.5,427.9 608.0,428.3 608.5,429.4 609.0,429.6 609.5,430.1 610.0,431.1 610.5,430.3 611.0,429.4 611.5,429.4 612.0,429.2 612.5,428.9 613.0,428.6 613.5,429.3 614.0,430.0 614.5,429.4 615.0,428.8 615.5,429.2 616.0,430.2 616.5,430.3 617.0,428.2 617.5,418.3 618.0,408.2 618.5,417.8 619.0,427.2 619.5,429.4 620.0,430.3 620.5,430.7 621.0,430.3 621.5,429.8 622.0,430.5 622.5,431.8 623.0,431.8 623.5,430.8 624.0,430.2 624.5,430.5 625.0,430.5 625.5,430.6 626.0,430.8 626.5,430.8 627.0,430.9 627.5,431.1 628.0,431.1 628.5,430.7 629.0,430.7 629.5,431.4 630.0,431.4 630.5,430.9 631.0,431.0 631.5,430.9 632.0,430.3 632.5,430.2 633.0,430.7 633.5,430.7 634.0,430.1 634.5,430.0 635.0,430.9 635.5,430.8 636.0,429.7 636.5,427.7 637.0,425.6 637.5,427.9 638.0,429.7 638.5,430.0 639.0,429.9 639.5,429.5 640.0,429.5 640.5,429.7 641.0,429.7 641.5,429.7 642.0,429.7 642.5,430.2 643.0,430.5 643.5,430.0 644.0,429.3 644.5,429.2 645.0,428.4 645.5,427.1 646.0,428.4 646.5,429.5 647.0,429.6 647.5,429.9 648.0,430.2 648.5,430.4 649.0,430.3 649.5,430.0 650.0,429.7 650.5,429.6 651.0,429.6 651.5,429.7 652.0,429.5 652.5,429.2 653.0,429.7 653.5,430.0 654.0,430.0 654.5,430.4 655.0,430.8 655.5,431.2 656.0,431.1 656.5,430.2 657.0,429.9 657.5,430.4 658.0,431.3 658.5,431.4 659.0,430.1 659.5,430.0 660.0,430.4 660.5,430.3 661.0,429.9 661.5,429.6 662.0,430.0 662.5,429.5 663.0,428.4 663.5,429.2 664.0,430.2 664.5,430.4 665.0,430.4 665.5,429.7 666.0,429.2 666.5,429.6 667.0,430.2 667.5,430.0 668.0,429.5 668.5,429.6 669.0,429.9 669.5,430.0 670.0,430.5 670.5,430.7 671.0,429.7 671.5,429.6 672.0,430.9 672.5,431.9 673.0,431.6 673.5,430.9 674.0,430.1 674.5,429.9 675.0,430.0 675.5,429.7 676.0,429.4 676.5,430.4 677.0,431.6 677.5,431.0 678.0,430.4 678.5,430.4 679.0,430.4 679.5,430.4 680.0,430.6 680.5,430.5 681.0,430.6 681.5,431.3 682.0,431.5 682.5,431.6 683.0,431.3 683.5,430.9 684.0,430.6 684.5,429.7 685.0,428.6 685.5,428.6 686.0,429.0 686.5,428.7 687.0,428.3 687.5,429.7 688.0,430.9 688.5,430.8 689.0,430.4 689.5,430.1 690.0,429.9 690.5,430.3 691.0,430.6 691.5,430.4 692.0,429.8 692.5,429.6 693.0,430.1 693.5,430.3 694.0,430.7 694.5,430.9 695.0,431.3 695.5,431.0 696.0,430.3 696.5,429.6 697.0,429.0 697.5,428.8 698.0,430.0 698.5,430.3 699.0,429.7 699.5,429.7 700.0,429.9 700.5,430.2 701.0,429.6 701.5,428.5 702.0,429.4 702.5,429.7 703.0,428.3 703.5,429.5 704.0,430.0 704.5,430.0 705.0,429.9 705.5,429.8 706.0,429.7 706.5,429.6 707.0,430.1 707.5,430.8 708.0,430.4 708.5,429.4 709.0,428.8 709.5,428.9 710.0,429.1 710.5,429.4 711.0,429.4 711.5,429.4 712.0,429.5 712.5,429.4 713.0,428.5 713.5,427.2 714.0,427.7 714.5,428.9 715.0,429.3 715.5,429.1 716.0,429.3 716.5,430.1 717.0,430.5 717.5,430.2 718.0,429.4 718.5,429.4 719.0,430.0 719.5,430.0 720.0,429.4 720.5,429.1 721.0,429.0 721.5,428.9 722.0,429.1 722.5,429.3 723.0,429.4 723.5,429.3 724.0,429.6 724.5,430.0 725.0,429.6 725.5,429.3 726.0,429.9 726.5,430.2 727.0,430.4 727.5,431.0 728.0,431.0 728.5,430.8 729.0,431.2 729.5,431.8 730.0,431.6 730.5,431.0 731.0,430.6 731.5,430.3 732.0,429.9 732.5,428.0 733.0,425.4 733.5,426.6 734.0,428.7 734.5,429.4 735.0,429.5 735.5,429.6 736.0,430.2 736.5,430.6 737.0,429.8 737.5,429.2 738.0,428.9 738.5,428.6 739.0,429.1 739.5,430.0 740.0,429.9 740.5,429.2 741.0,429.5 741.5,430.1 742.0,430.0 742.5,430.0 743.0,430.4 743.5,430.9 744.0,430.9 744.5,430.3 745.0,429.6 745.5,429.9 746.0,430.6 746.5,430.6 747.0,430.1 747.5,430.1 748.0,430.2 748.5,429.9 749.0,429.4 749.5,429.1 750.0,429.0 750.5,429.4 751.0,430.3 751.5,430.3 752.0,430.0 752.5,430.7 753.0,430.4 753.5,429.8 754.0,430.4 754.5,430.9 755.0,430.4 755.5,429.5 756.0,429.4 756.5,429.4 757.0,429.1 757.5,428.7 758.0,426.7 758.5,424.0 759.0,425.4 759.5,427.3 760.0,427.9 760.5,427.9 761.0,427.9 761.5,427.7 762.0,427.1 762.5,426.4 763.0,426.6 763.5,427.2 764.0,427.2 764.5,426.6 765.0,426.4 765.5,426.2 766.0,425.3 766.5,424.2 767.0,422.6 767.5,422.0 768.0,421.0 768.5,418.5 769.0,414.8 769.5,407.5 770.0,396.1 770.5,378.9 771.0,353.7 771.5,316.2 772.0,263.8 772.5,209.7 773.0,185.3 773.5,209.7 774.0,263.8 774.5,316.2 775.0,353.7 775.5,378.9 776.0,396.1 776.5,406.3 777.0,414.2 777.5,418.3 778.0,420.1 778.5,421.9 779.0,423.4 779.5,423.8 780.0,424.1 780.5,425.1 781.0,426.0 781.5,426.8 782.0,427.0 782.5,427.1 783.0,426.9 783.5,427.1 784.0,427.9 784.5,428.6 785.0,428.8 785.5,428.5 786.0,427.7 786.5,427.3 787.0,427.6 787.5,427.8 788.0,428.3 788.5,428.9 789.0,429.0 789.5,428.2 790.0,427.5 790.5,428.2 791.0,429.0 791.5,429.3 792.0,429.0 792.5,428.0 793.0,428.2 793.5,429.2 794.0,429.8 794.5,429.6 795.0,429.3 795.5,429.3 796.0,429.5 796.5,429.2 797.0,429.5 797.5,430.3 798.0,430.6 798.5,429.7 799.0,427.9 799.5,428.2 800.0,429.6 800.5,430.3 801.0,429.9 801.5,429.6 802.0,430.2 802.5,430.7 803.0,430.5 803.5,430.1 804.0,430.2 804.5,430.6 805.0,430.0 805.5,429.4 806.0,429.8 806.5,429.9 807.0,429.7 807.5,429.4 808.0,429.0 808.5,428.8 809.0,428.9 809.5,429.4 810.0,429.4 810.5,429.0 811.0,429.8 811.5,430.2 812.0,429.8 812.5,429.9 813.0,430.0 813.5,429.6 814.0,429.1 814.5,429.1 815.0,429.5 815.5,429.5 816.0,429.9 816.5,430.0 817.0,429.9 817.5,429.7 818.0,429.5 818.5,429.7 819.0,429.3 819.5,428.6 820.0,428.3 820.5,428.0 821.0,428.1 821.5,429.1 822.0,429.6 822.5,430.4 823.0,430.3 823.5,429.3 824.0,428.5 824.5,428.4 825.0,428.5 825.5,429.0 826.0,428.7 826.5,428.6 827.0,429.0 827.5,429.4 828.0,429.5 828.5,429.2 829.0,428.9 829.5,429.0 830.0,429.4 830.5,430.1 831.0,430.3 831.5,430.0 832.0,429.5 832.5,428.6 833.0,427.3 833.5,422.0 834.0,409.6 834.5,393.7 835.0,385.9 835.5,393.7 836.0,409.2 836.5,419.8 837.0,416.3 837.5,408.2 838.0,418.0 838.5,427.0 839.0,428.5 839.5,429.6 840.0,430.5 840.5,430.5 841.0,430.8 841.5,431.2 842.0,430.9 842.5,430.5 843.0,430.7 843.5,430.6 844.0,430.0 844.5,429.8 845.0,429.9 845.5,430.1 846.0,430.1 846.5,429.1 847.0,428.8 847.5,429.5 848.0,430.2 848.5,430.0 849.0,429.7 849.5,430.5 850.0,431.5 850.5,431.1 851.0,430.2 851.5,429.7 852.0,429.7 852.5,430.0 853.0,430.1 853.5,429.7 854.0,429.5 854.5,429.9 855.0,430.2 855.5,430.4 856.0,430.8 856.5,431.3 857.0,431.1 857.5,430.0 858.0,429.6 858.5,430.3 859.0,430.3 859.5,430.3 860.0,430.7 860.5,430.7 861.0,430.1 861.5,429.2 862.0,429.2 862.5,429.8 863.0,430.6 863.5,430.9 864.0,430.4 864.5,430.4 865.0,430.2 865.5,429.0 866.0,428.7 866.5,428.7 867.0,428.4 867.5,427.4 868.0,426.8 868.5,428.1 869.0,429.2 869.5,429.4 870.0,429.8 870.5,430.0 871.0,429.2 871.5,428.4 872.0,429.8 872.5,430.0 873.0,429.7 873.5,429.8 874.0,429.7 874.5,429.5 875.0,429.2 875.5,429.0 876.0,428.6 876.5,428.9 877.0,429.4 877.5,429.3 878.0,429.6 878.5,429.8 879.0,429.4 879.5,429.0 880.0,429.4 880.5,429.7 881.0,429.2 881.5,429.5 882.0,430.1 882.5,429.6 883.0,428.9 883.5,429.3 884.0,429.9 884.5,430.3 885.0,430.7 885.5,430.7 886.0,430.3 886.5,430.3 887.0,430.2 887.5,429.7 888.0,430.4 888.5,430.7 889.0,429.8 889.5,429.4 890.0,429.5 890.5,429.2 891.0,429.1 891.5,428.7 892.0,428.9 892.5,428.7 893.0,428.1 893.5,427.3 894.0,426.8 894.5,428.4 895.0,429.3 895.5,429.3 896.0,429.7 896.5,429.8 897.0,429.7 897.5,429.6 898.0,429.3 898.5,428.8 899.0,429.0 899.5,429.0 900.0,428.7 900.5,429.2 901.0,429.9 901.5,429.2 902.0,428.5 902.5,428.4 903.0,428.2 903.5,428.0 904.0,428.7 904.5,429.5 905.0,429.7 905.5,429.5 906.0,429.3 906.5,429.8 907.0,430.8 907.5,430.8 908.0,429.6 908.5,428.6 909.0,427.8 909.5,427.2 910.0,427.8 910.5,428.9 911.0,429.4 911.5,429.4 912.0,429.0 912.5,428.7 913.0,429.1 913.5,429.7 914.0,429.6 914.5,429.2 915.0,428.7 915.5,428.9 916.0,429.6 916.5,429.6 917.0,428.9 917.5,427.2 918.0,425.4 918.5,427.1 919.0,429.1 919.5,429.2 920.0,429.1 920.5,428.7 921.0,428.0 921.5,427.5 922.0,425.8 922.5,423.6 923.0,422.8 923.5,423.9 924.0,425.8 924.5,427.1 925.0,427.0 925.5,427.7 926.0,429.0 926.5,429.7 927.0,429.8 927.5,429.2 928.0,428.2 928.5,429.2 929.0,429.6 929.5,429.5 930.0,429.0 930.5,427.0 931.0,420.8 931.5,408.9 932.0,397.0 932.5,390.0 933.0,397.0 933.5,410.4 934.0,421.4 934.5,427.2 935.0,426.9 935.5,413.0 936.0,398.5 936.5,412.6 937.0,426.7 937.5,429.1 938.0,429.2 938.5,429.3 939.0,428.7 939.5,427.5 940.0,426.9 940.5,428.1 941.0,428.6 941.5,428.2 942.0,428.2 942.5,428.6 943.0,428.9 943.5,429.1 944.0,428.8 944.5,427.6 945.0,425.9 945.5,426.8 946.0,428.7 946.5,429.2 947.0,429.0 947.5,428.9 948.0,428.7 948.5,428.6 949.0,429.0 949.5,429.2 950.0,429.4 950.5,429.2 951.0,428.5 951.5,429.0 952.0,430.0 952.5,430.1 953.0,429.9 953.5,429.9 954.0,429.7 954.5,429.7 955.0,429.9 955.5,430.2 956.0,430.3 956.5,430.2 957.0,430.4 957.5,430.6 958.0,430.3 958.5,427.0 959.0,423.7 959.5,427.2 960.0,430.7 960.5,430.7 961.0,430.3 961.5,430.2 962.0,430.4 962.5,429.8 963.0,429.0 963.5,428.6 964.0,429.1 964.5,429.3 965.0,429.0 965.5,427.5 966.0,421.7 966.5,416.5 967.0,423.3 967.5,429.2 968.0,429.3 968.5,429.2 969.0,429.2 969.5,429.7 970.0,429.8 970.5,429.3 971.0,429.4 971.5,429.9 972.0,430.1 972.5,429.6 973.0,428.7 973.5,427.4 974.0,425.5 974.5,423.2 975.0,421.8 975.5,423.7 976.0,427.1 976.5,429.1 977.0,429.8 977.5,430.3 978.0,429.9 978.5,429.3 979.0,429.4 979.5,430.2 980.0,430.2 980.5,429.3 981.0,428.7 981.5,429.3 982.0,430.1 982.5,429.6 983.0,428.6 983.5,428.1 984.0,428.8 984.5,430.1 985.0,430.4 985.5,429.5 986.0,428.7 986.5,428.2 987.0,427.9 987.5,428.3 988.0,428.7 988.5,428.6 989.0,428.0 989.5,428.0 990.0,428.5 990.5,428.7 991.0,429.0 991.5,428.8 992.0,428.6 992.5,429.1 993.0,429.1 993.5,428.8 994.0,429.5 994.5,429.7 995.0,428.8 995.5,427.3 996.0,427.2 996.5,428.5 997.0,428.9 997.5,428.3 998.0,427.9 998.5,428.1 999.0,428.9 999.5,429.2 1000.0,428.9 1000.5,429.1 1001.0,429.9 1001.5,430.3 1002.0,429.9 1002.5,429.1 1003.0,428.5 1003.5,428.4 1004.0,428.6 1004.5,428.8 1005.0,429.1 1005.5,429.8 1006.0,429.5 1006.5,429.5 1007.0,430.4 1007.5,430.8 1008.0,430.0 1008.5,429.1 1009.0,428.5 1009.5,428.9 1010.0,429.3 1010.5,429.1 1011.0,429.0 1011.5,429.7 1012.0,430.2 1012.5,430.5 1013.0,430.6 1013.5,430.0 1014.0,429.1 1014.5,429.1 1015.0,428.9 1015.5,429.3 1016.0,429.5 1016.5,429.7 1017.0,430.0 1017.5,430.1 1018.0,430.3 1018.5,430.2 1019.0,429.7 1019.5,429.3 1020.0,429.1 1020.5,428.7 1021.0,427.4 1021.5,426.6 1022.0,428.3 1022.5,428.9 1023.0,428.5 1023.5,428.1 1024.0,428.0 1024.5,428.5 1025.0,428.6 1025.5,428.8 1026.0,429.3 1026.5,429.3 1027.0,428.9 1027.5,428.4 1028.0,428.9 1028.5,429.8 1029.0,430.1 1029.5,430.5 1030.0,430.7 1030.5,429.8 1031.0,428.7 1031.5,428.1 1032.0,427.9 1032.5,428.2 1033.0,428.9 1033.5,428.8 1034.0,428.7 1034.5,429.4 1035.0,430.7 1035.5,430.7 1036.0,430.2 1036.5,429.8 1037.0,428.8 1037.5,428.4 1038.0,428.7 1038.5,428.8 1039.0,428.9 1039.5,429.8 1040.0,430.2 1040.5,429.5 1041.0,429.1 1041.5,429.3 1042.0,429.4 1042.5,429.9 1043.0,429.7 1043.5,428.8 1044.0,428.6 1044.5,428.7 1045.0,428.4 1045.5,427.8 1046.0,427.3 1046.5,427.7 1047.0,428.7 1047.5,429.2 1048.0,428.6 1048.5,428.1 1049.0,428.4 1049.5,428.5 1050.0,428.0 1050.5,426.8 1051.0,425.8 1051.5,427.7 1052.0,429.3 1052.5,429.5 1053.0,429.1 1053.5,427.9 1054.0,426.9 1054.5,428.1 1055.0,428.9 1055.5,429.1 1056.0,429.1 1056.5,429.3 1057.0,429.9 1057.5,429.7 1058.0,429.6 1058.5,430.1 1059.0,429.4 1059.5,428.5 1060.0,428.7 1060.5,429.4 1061.0,429.8 1061.5,429.4 1062.0,428.2 1062.5,427.9 1063.0,428.2 1063.5,428.9 1064.0,429.1 1064.5,428.8 1065.0,428.8 1065.5,428.8 1066.0,428.9 1066.5,428.8 1067.0,428.2 1067.5,428.0 1068.0,429.0 1068.5,429.3 1069.0,429.0 1069.5,429.1 1070.0,429.2 1070.5,429.3 1071.0,429.2 1071.5,429.0 1072.0,429.5 1072.5,429.7 1073.0,429.6 1073.5,430.4 1074.0,431.0 1074.5,430.9 1075.0,430.7 1075.5,430.0 1076.0,429.3 1076.5,429.0 1077.0,429.0 1077.5,429.4 1078.0,429.3 1078.5,428.8 1079.0,428.4 1079.5,429.3 1080.0,429.2 1080.5,427.4 1081.0,426.2 1081.5,427.6 1082.0,428.8 1082.5,429.0 1083.0,428.4 1083.5,427.6 1084.0,428.5 1084.5,429.0 1085.0,428.8 1085.5,428.8 1086.0,429.0 1086.5,429.4 1087.0,429.4 1087.5,428.9 1088.0,427.3 1088.5,425.8 1089.0,426.9 1089.5,427.8 1090.0,427.6 1090.5,428.0 1091.0,428.8 1091.5,427.6 1092.0,418.5 1092.5,409.6 1093.0,418.7 1093.5,427.4 1094.0,428.6 1094.5,428.8 1095.0,429.3 1095.5,429.0 1096.0,426.4 1096.5,424.2 1097.0,426.7 1097.5,428.6 1098.0,429.3 1098.5,429.7 1099.0,429.4 1099.5,429.2 1100.0,429.4 1100.5,429.6 1101.0,429.5 1101.5,429.5 1102.0,429.5 1102.5,429.0 1103.0,428.8 1103.5,429.1 1104.0,428.9 1104.5,428.5 1105.0,428.1 1105.5,428.3 1106.0,428.7 1106.5,427.6 1107.0,425.8 1107.5,427.1 1108.0,428.5 1108.5,429.1 1109.0,429.3 1109.5,428.5 1110.0,427.8 1110.5,427.0 1111.0,426.2 1111.5,427.6 1112.0,428.2 1112.5,427.5 1113.0,428.2 1113.5,429.0 1114.0,429.1 1114.5,430.0 1115.0,430.8 1115.5,430.4 1116.0,429.8 1116.5,429.0 1117.0,428.3 1117.5,428.4 1118.0,428.6 1118.5,428.8 1119.0,428.9 1119.5,428.7 1120.0,428.6 1120.5,427.7 1121.0,424.3 1121.5,419.0 1122.0,415.6 1122.5,418.3 1123.0,423.8 1123.5,427.6 1124.0,429.2 1124.5,429.0 1125.0,428.4 1125.5,428.6 1126.0,429.0 1126.5,429.4 1127.0,429.7 1127.5,429.7 1128.0,429.7 1128.5,429.5 1129.0,429.1 1129.5,429.2 1130.0,429.4 1130.5,429.5 1131.0,429.5 1131.5,429.3 1132.0,428.9 1132.5,429.2 1133.0,429.6 1133.5,429.0 1134.0,429.1 1134.5,429.4 1135.0,429.2 1135.5,428.4 1136.0,428.5 1136.5,429.3 1137.0,429.1 1137.5,428.2 1138.0,428.4 1138.5,429.5 1139.0,429.6 1139.5,429.3 1140.0,429.9 1140.5,429.5 1141.0,428.9 1141.5,429.4 1142.0,429.2 1142.5,428.4 1143.0,428.5 1143.5,428.7 1144.0,429.2 1144.5,429.9 1145.0,429.9 1145.5,429.2 1146.0,429.1 1146.5,429.3 1147.0,428.9 1147.5,428.6 1148.0,428.7 1148.5,428.7 1149.0,428.6 1149.5,429.1 1150.0,429.3 1150.5,429.5 1151.0,429.7 1151.5,429.7 1152.0,429.6 1152.5,429.5 1153.0,428.9 1153.5,428.2 1154.0,428.0 1154.5,428.1 1155.0,427.8 1155.5,427.8 1156.0,427.7 1156.5,426.1 1157.0,424.5 1157.5,426.3 1158.0,427.9 1158.5,428.0 1159.0,428.0 1159.5,428.3 1160.0,427.6 1160.5,421.5 1161.0,415.6 1161.5,421.9 1162.0,427.8 1162.5,428.2 1163.0,425.6 1163.5,422.7 1164.0,425.3 1164.5,428.0 1165.0,428.1 1165.5,428.2 1166.0,428.6 1166.5,428.7 1167.0,428.8 1167.5,429.1 1168.0,429.1 1168.5,429.4 1169.0,429.7 1169.5,429.7 1170.0,429.3 1170.5,428.5 1171.0,428.2 1171.5,428.7 1172.0,429.4 1172.5,429.5 1173.0,428.9 1173.5,428.8 1174.0,428.6 1174.5,428.5 1175.0,428.9 1175.5,429.3 1176.0,429.4 1176.5,429.1 1177.0,428.6 1177.5,429.0 1178.0,429.3 1178.5,429.0 1179.0,428.7 1179.5,428.2 1180.0,427.9 1180.5,427.6 1181.0,427.5 1181.5,427.2 1182.0,425.9 1182.5,427.7 1183.0,429.2 1183.5,429.2 1184.0,429.0 1184.5,428.7 1185.0,428.8 1185.5,428.6 1186.0,428.1 1186.5,428.6 1187.0,428.9 1187.5,429.1 1188.0,429.3 1188.5,429.0 1189.0,429.2 1189.5,429.3 1190.0,429.2 1190.5,429.1 1191.0,428.0 1191.5,426.0 1192.0,424.6 1192.5,426.1 1193.0,427.7 1193.5,428.0 1194.0,428.3 1194.5,428.5 1195.0,428.5 1195.5,428.4 1196.0,428.6 1196.5,428.7 1197.0,428.3 1197.5,427.0 1198.0,425.5 1198.5,426.0 1199.0,427.0 1199.5,427.8 1200.0,427.8 1200.5,427.6 1201.0,428.0 1201.5,427.7 1202.0,427.6 1202.5,426.8 1203.0,423.7 1203.5,418.9 1204.0,416.1 1204.5,418.3 1205.0,423.4 1205.5,427.0 1206.0,428.0 1206.5,428.4 1207.0,428.2 1207.5,427.5 1208.0,427.4 1208.5,428.0 1209.0,428.3 1209.5,428.4 1210.0,428.4 1210.5,428.4 1211.0,428.2 1211.5,428.3 1212.0,428.1 1212.5,424.6 1213.0,420.5 1213.5,423.9 1214.0,427.7 1214.5,428.0 1215.0,427.6 1215.5,428.4 1216.0,428.8 1216.5,428.5 1217.0,428.2 1217.5,428.8 1218.0,428.8 1218.5,427.4 1219.0,426.0 1219.5,426.0 1220.0,426.3 1220.5,426.8 1221.0,427.0 1221.5,426.9 1222.0,427.4 1222.5,427.9 1223.0,428.1 1223.5,428.5 1224.0,428.2 1224.5,427.6 1225.0,427.7 1225.5,427.9 1226.0,427.7 1226.5,427.3 1227.0,426.5 1227.5,426.5 1228.0,427.5 1228.5,427.2 1229.0,426.8 1229.5,428.0 1230.0,428.8 1230.5,428.2 1231.0,427.7 1231.5,428.2 1232.0,429.0 1232.5,429.6 1233.0,429.3 1233.5,428.2 1234.0,428.3 1234.5,429.1 1235.0,429.3 1235.5,429.0 1236.0,428.3 1236.5,426.4 1237.0,425.3 1237.5,426.8 1238.0,428.4 1238.5,428.8 1239.0,428.5 1239.5,428.8 1240.0,429.5 1240.5,429.3 1241.0,428.8 1241.5,428.2 1242.0,428.7 1242.5,429.7 1243.0,429.4 1243.5,428.4 1244.0,428.2 1244.5,428.2 1245.0,426.6 1245.5,422.0 1246.0,413.9 1246.5,409.3 1247.0,413.7 1247.5,421.7 1248.0,426.6 1248.5,428.1 1249.0,428.3 1249.5,428.5 1250.0,428.9 1250.5,428.6 1251.0,427.5 1251.5,427.6 1252.0,428.2 1252.5,428.5 1253.0,428.9 1253.5,428.9 1254.0,428.6 1254.5,428.5 1255.0,428.4 1255.5,426.3 1256.0,423.9 1256.5,425.9 1257.0,427.9 1257.5,428.4 1258.0,429.0 1258.5,429.2 1259.0,428.9 1259.5,428.6 1260.0,428.5 1260.5,428.7 1261.0,429.2 1261.5,429.9 1262.0,430.0 1262.5,429.2 1263.0,428.7 1263.5,428.6 1264.0,428.6 1264.5,429.2 1265.0,429.7 1265.5,428.6 1266.0,426.8 1266.5,425.6 1267.0,424.9 1267.5,424.9 1268.0,425.6 1268.5,427.0 1269.0,427.9 1269.5,427.5 1270.0,427.6 1270.5,428.7 1271.0,428.6 1271.5,427.7 1272.0,427.2 1272.5,427.1 1273.0,427.2 1273.5,427.8 1274.0,428.4 1274.5,428.4 1275.0,427.9 1275.5,427.6 1276.0,428.1 1276.5,428.5 1277.0,428.1 1277.5,428.2 1278.0,428.7 1278.5,428.7 1279.0,428.7 1279.5,428.7 1280.0,428.6 1280.5,428.5 1281.0,428.4 1281.5,428.2 1282.0,428.1 1282.5,428.2 1283.0,428.2 1283.5,428.4 1284.0,428.7 1284.5,428.3 1285.0,427.6 1285.5,427.9 1286.0,428.3 1286.5,428.6 1287.0,428.7 1287.5,428.8 1288.0,428.5 1288.5,428.5 1289.0,429.2 1289.5,429.6 1290.0,429.4 1290.5,429.1 1291.0,428.8 1291.5,428.2 1292.0,428.0 1292.5,428.4 1293.0,427.4 1293.5,423.8 1294.0,418.9 1294.5,416.3 1295.0,418.8 1295.5,424.5 1296.0,428.5 1296.5,429.5 1297.0,429.2 1297.5,429.0 1298.0,429.0 1298.5,428.9 1299.0,428.7 1299.5,428.6 1300.0,428.8 1300.5,428.4 1301.0,428.4 1301.5,428.6 1302.0,428.4 1302.5,428.3 1303.0,428.5 1303.5,428.2 1304.0,428.0 1304.5,428.3 1305.0,428.8 1305.5,429.2 1306.0,429.0 1306.5,429.0 1307.0,428.9 1307.5,428.9 1308.0,428.9 1308.5,429.1 1309.0,429.4 1309.5,429.3 1310.0,428.7 1310.5,428.9 1311.0,429.1 1311.5,428.6 1312.0,428.1 1312.5,427.3 1313.0,426.7 1313.5,427.7 1314.0,429.0 1314.5,429.7 1315.0,430.4 1315.5,430.1 1316.0,429.7 1316.5,429.9 1317.0,429.7 1317.5,429.2 1318.0,429.1 1318.5,428.8 1319.0,428.9 1319.5,429.5 1320.0,429.5 1320.5,429.1 1321.0,428.5 1321.5,428.2 1322.0,428.4 1322.5,428.9 1323.0,428.8 1323.5,428.6 1324.0,428.6 1324.5,428.4 1325.0,428.2 1325.5,428.4 1326.0,429.0 1326.5,428.8 1327.0,427.6 1327.5,426.8 1328.0,427.6 1328.5,428.2 1329.0,428.5 1329.5,428.2 1330.0,427.8 1330.5,428.7 1331.0,429.5 1331.5,429.1 1332.0,428.7 1332.5,428.7 1333.0,428.7 1333.5,428.3 1334.0,428.1 1334.5,427.8 1335.0,427.7 1335.5,427.9 1336.0,427.7 1336.5,427.5 1337.0,427.0 1337.5,426.2 1338.0,426.6 1338.5,427.1 1339.0,426.7 1339.5,427.1 1340.0,427.8 1340.5,427.9 1341.0,427.7 1341.5,427.0 1342.0,426.0 1342.5,424.7 1343.0,422.3 1343.5,419.7 1344.0,417.5 1344.5,415.6 1345.0,414.2 1345.5,413.7 1346.0,414.6 1346.5,416.2 1347.0,417.4 1347.5,418.1 1348.0,418.6 1348.5,419.3 1349.0,420.9 1349.5,423.2 1350.0,425.3 1350.5,427.0 1351.0,428.2 1351.5,428.2 1352.0,427.8 1352.5,428.2 1353.0,428.6 1353.5,428.6 1354.0,428.7 1354.5,428.7 1355.0,428.5 1355.5,428.2 1356.0,428.8 1356.5,429.6 1357.0,429.5 1357.5,428.7 1358.0,428.2" fill="none" stroke="#333c3c" stroke-width="1" stroke-linejoin="round"/>
<path d="M155,121.5H1358.5V445.5H149" fill="none" stroke="#4a4a4a"/>
<path d="M155.5,121V446" stroke="#f00000" stroke-width="1.2"/>
<path d="M481.8,424.5l5.4,5.2m0,-5.2l-5.4,5.2" stroke="#333" stroke-width="3.4" stroke-linecap="square" fill="none"/><path d="M481.8,424.5l5.4,5.2m0,-5.2l-5.4,5.2" stroke="#fff" stroke-width="1.8" stroke-linecap="square" fill="none"/>
<path d="M230.5,291.0V333.0" stroke="#f00000" stroke-width="1"/>
<path d="M230.5,336.0l-3.2,-6.2h6.4z" fill="#f00000"/>
<path d="M280.5,375.0V402.0" stroke="#f00000" stroke-width="1"/>
<path d="M280.5,405.0l-3.2,-6.2h6.4z" fill="#f00000"/>
<path d="M309.5,347.5V409.0" stroke="#f00000" stroke-width="1"/>
<path d="M309.5,412.0l-3.2,-6.2h6.4z" fill="#f00000"/>
<path d="M367.5,350.0V392.0" stroke="#f00000" stroke-width="1"/>
<path d="M367.5,395.0l-3.2,-6.2h6.4z" fill="#f00000"/>
<path d="M412.5,374.0V405.0" stroke="#f00000" stroke-width="1"/>
<path d="M412.5,408.0l-3.2,-6.2h6.4z" fill="#f00000"/>
<path d="M440.5,336.0V407.0" stroke="#f00000" stroke-width="1"/>
<path d="M440.5,410.0l-3.2,-6.2h6.4z" fill="#f00000"/>
<path d="M484.5,362.5V402.0" stroke="#f00000" stroke-width="1"/>
<path d="M484.5,405.0l-3.2,-6.2h6.4z" fill="#f00000"/>
<path d="M590.5,164.7V195.8" stroke="#f00000" stroke-width="1"/>
<path d="M590.5,198.8l-3.2,-6.2h6.4z" fill="#f00000"/>
<path d="M618.5,354.0V397.0" stroke="#f00000" stroke-width="1"/>
<path d="M618.5,400.0l-3.2,-6.2h6.4z" fill="#f00000"/>
<path d="M773.5,155.7V177.6" stroke="#f00000" stroke-width="1"/>
<path d="M773.5,180.6l-3.2,-6.2h6.4z" fill="#f00000"/>
<path d="M836.5,337.5V378.0" stroke="#f00000" stroke-width="1"/>
<path d="M836.5,381.0l-3.2,-6.2h6.4z" fill="#f00000"/>
<path d="M933.5,334.0V379.0" stroke="#f00000" stroke-width="1"/>
<path d="M933.5,382.0l-3.2,-6.2h6.4z" fill="#f00000"/>
<path d="M967.5,363.0V406.0" stroke="#f00000" stroke-width="1"/>
<path d="M967.5,409.0l-3.2,-6.2h6.4z" fill="#f00000"/>
<path d="M1093.5,357.5V400.5" stroke="#f00000" stroke-width="1"/>
<path d="M1093.5,403.5l-3.2,-6.2h6.4z" fill="#f00000"/>
<path d="M1123.5,360.0V403.0" stroke="#f00000" stroke-width="1"/>
<path d="M1123.5,406.0l-3.2,-6.2h6.4z" fill="#f00000"/>
<path d="M1162.5,364.0V407.0" stroke="#f00000" stroke-width="1"/>
<path d="M1162.5,410.0l-3.2,-6.2h6.4z" fill="#f00000"/>
<path d="M1205.5,365.0V408.5" stroke="#f00000" stroke-width="1"/>
<path d="M1205.5,411.5l-3.2,-6.2h6.4z" fill="#f00000"/>
<path d="M1213.5,329.0V409.5" stroke="#f00000" stroke-width="1"/>
<path d="M1213.5,412.5l-3.2,-6.2h6.4z" fill="#f00000"/>
<path d="M1247.5,358.5V399.5" stroke="#f00000" stroke-width="1"/>
<path d="M1247.5,402.5l-3.2,-6.2h6.4z" fill="#f00000"/>
<path d="M1295.5,366.0V409.5" stroke="#f00000" stroke-width="1"/>
<path d="M1295.5,412.5l-3.2,-6.2h6.4z" fill="#f00000"/>
<path d="M1346.5,358.5V401.5" stroke="#f00000" stroke-width="1"/>
<path d="M1346.5,404.5l-3.2,-6.2h6.4z" fill="#f00000"/></g>
<g id="leftplot"><rect x="127" y="565" width="700" height="324" fill="#fff"/>
<path d="M122,888.5H127" stroke="#4a4a4a"/>
<path d="M123.5,877.5H127" stroke="#8c8c8c"/>
<path d="M123.5,866.5H127" stroke="#8c8c8c"/>
<path d="M123.5,856.5H127" stroke="#8c8c8c"/>
<path d="M123.5,845.5H127" stroke="#8c8c8c"/>
<path d="M122,834.5H127" stroke="#4a4a4a"/>
<path d="M123.5,823.5H127" stroke="#8c8c8c"/>
<path d="M123.5,812.5H127" stroke="#8c8c8c"/>
<path d="M123.5,802.5H127" stroke="#8c8c8c"/>
<path d="M123.5,791.5H127" stroke="#8c8c8c"/>
<path d="M122,781.5H127" stroke="#4a4a4a"/>
<path d="M123.5,770.5H127" stroke="#8c8c8c"/>
<path d="M123.5,759.5H127" stroke="#8c8c8c"/>
<path d="M123.5,749.5H127" stroke="#8c8c8c"/>
<path d="M123.5,738.5H127" stroke="#8c8c8c"/>
<path d="M122,727.5H127" stroke="#4a4a4a"/>
<path d="M123.5,716.5H127" stroke="#8c8c8c"/>
<path d="M123.5,705.5H127" stroke="#8c8c8c"/>
<path d="M123.5,695.5H127" stroke="#8c8c8c"/>
<path d="M123.5,684.5H127" stroke="#8c8c8c"/>
<path d="M122,673.5H127" stroke="#4a4a4a"/>
<path d="M123.5,662.5H127" stroke="#8c8c8c"/>
<path d="M123.5,651.5H127" stroke="#8c8c8c"/>
<path d="M123.5,641.5H127" stroke="#8c8c8c"/>
<path d="M123.5,630.5H127" stroke="#8c8c8c"/>
<path d="M122,619.5H127" stroke="#4a4a4a"/>
<path d="M123.5,608.5H127" stroke="#8c8c8c"/>
<path d="M123.5,597.5H127" stroke="#8c8c8c"/>
<path d="M123.5,587.5H127" stroke="#8c8c8c"/>
<path d="M123.5,576.5H127" stroke="#8c8c8c"/>
<path d="M122,565.5H127" stroke="#4a4a4a"/>
<path d="M131.5,889V893" stroke="#8c8c8c"/>
<path d="M145.5,889V893" stroke="#8c8c8c"/>
<path d="M159.5,889V893" stroke="#8c8c8c"/>
<path d="M173.5,889V893" stroke="#8c8c8c"/>
<path d="M187.5,889V895" stroke="#4a4a4a"/>
<path d="M201.5,889V893" stroke="#8c8c8c"/>
<path d="M214.5,889V893" stroke="#8c8c8c"/>
<path d="M228.5,889V893" stroke="#8c8c8c"/>
<path d="M242.5,889V893" stroke="#8c8c8c"/>
<path d="M256.5,889V895" stroke="#4a4a4a"/>
<path d="M270.5,889V893" stroke="#8c8c8c"/>
<path d="M284.5,889V893" stroke="#8c8c8c"/>
<path d="M297.5,889V893" stroke="#8c8c8c"/>
<path d="M311.5,889V893" stroke="#8c8c8c"/>
<path d="M325.5,889V895" stroke="#4a4a4a"/>
<path d="M339.5,889V893" stroke="#8c8c8c"/>
<path d="M353.5,889V893" stroke="#8c8c8c"/>
<path d="M127.7,837.3C128.5,837.4 130.8,839.3 132.6,838.4C134.4,837.4 136.7,831.7 138.2,831.6C139.7,831.5 140.3,835.5 141.6,837.7C142.9,840.0 143.9,843.7 146.1,845.1C148.4,846.6 152.9,845.9 155.1,846.3C157.4,846.6 158.0,847.5 159.6,847.2C161.3,846.9 163.5,846.0 165.3,844.5C167.0,843.0 168.7,838.0 170.2,838.2C171.7,838.3 173.0,844.0 174.3,845.6C175.5,847.1 175.6,847.2 177.7,847.4C179.7,847.6 183.9,847.1 186.7,846.7C189.5,846.3 192.5,845.6 194.5,845.1C196.6,844.7 197.4,845.5 199.1,844.0C200.7,842.5 202.5,836.3 204.2,835.9C205.9,835.5 207.5,841.3 209.2,841.5C210.8,841.8 212.5,837.6 214.1,837.3C215.8,836.9 217.5,838.0 219.3,839.3C221.1,840.6 223.5,844.3 225.0,845.1C226.5,846.0 227.1,845.2 228.3,844.5C229.6,843.7 230.9,840.4 232.4,840.4C233.9,840.4 235.2,843.6 237.3,844.5C239.5,845.3 242.8,845.7 245.2,845.6C247.7,845.5 249.8,844.6 252.0,843.8C254.2,842.9 256.2,839.8 258.3,840.4C260.4,841.0 262.6,846.2 264.4,847.2C266.1,848.1 267.2,846.3 268.9,846.3C270.6,846.3 272.4,847.2 274.5,847.2C276.6,847.2 279.2,847.1 281.3,846.3C283.3,845.4 285.1,843.1 286.9,842.2C288.7,841.3 290.1,840.0 292.1,840.6C294.1,841.3 296.5,845.6 298.8,846.3C301.2,846.9 303.0,845.0 306.0,844.5C309.1,843.9 314.0,844.2 317.3,842.9C320.6,841.6 323.4,837.1 325.6,836.6C327.9,836.1 329.4,839.3 330.8,840.0C332.2,840.6 331.9,840.6 334.2,840.4C336.4,840.2 342.6,839.1 344.3,838.8" fill="none" stroke="#3a4444" stroke-width="1.15"/>
<path d="M122,565.5H830" stroke="#4a4a4a"/>
<path d="M122,888.5H830" stroke="#4a4a4a"/>
<path d="M127.5,565V889" stroke="#4a4a4a"/></g>
<g id="rightplot"><rect x="700" y="565" width="660" height="324" fill="#fff"/>
<path d="M801.0,870.2C803.6,870.3 810.4,870.3 816.8,870.6C823.1,871.0 829.1,872.0 839.3,872.2C849.4,872.4 867.4,871.9 877.6,871.8C887.7,871.6 895.2,871.0 900.1,871.1C905.0,871.2 899.3,872.4 906.8,872.2C914.4,872.1 936.5,870.7 945.1,870.2C953.8,869.6 954.9,868.9 958.6,868.8C962.4,868.7 962.4,869.6 967.7,869.5C972.9,869.4 982.7,869.1 990.2,868.4C997.7,867.7 1006.7,866.8 1012.7,865.5C1018.7,864.1 1021.7,862.8 1026.2,860.5C1030.7,858.2 1035.6,855.1 1039.7,851.5C1043.9,847.9 1047.6,842.5 1051.0,839.1C1054.4,835.7 1057.6,834.0 1060.0,831.2C1062.4,828.4 1063.8,827.7 1065.6,822.2C1067.5,816.8 1069.6,805.5 1071.3,798.6C1073.0,791.6 1074.0,784.7 1075.8,780.5C1077.5,776.3 1080.0,773.7 1081.8,773.3C1083.7,773.0 1085.7,774.8 1087.0,778.3C1088.4,781.7 1088.8,787.7 1090.0,794.1C1091.2,800.4 1092.6,809.4 1094.5,816.6C1096.4,823.7 1098.8,831.2 1101.3,836.8C1103.7,842.5 1105.8,846.4 1109.1,850.4C1112.5,854.3 1118.0,858.4 1121.5,860.5C1125.1,862.6 1127.9,861.8 1130.5,862.7C1133.2,863.7 1134.3,865.5 1137.3,866.1C1140.3,866.8 1145.2,866.1 1148.6,866.6C1151.9,867.0 1153.1,868.3 1157.6,868.8C1162.1,869.3 1170.7,869.6 1175.6,869.5C1180.5,869.4 1183.1,868.9 1186.8,868.4C1190.6,867.9 1194.7,866.7 1198.1,866.6C1201.5,866.5 1204.3,868.0 1207.1,867.9C1209.9,867.9 1212.4,867.4 1215.0,866.1C1217.6,864.9 1221.0,861.4 1222.9,860.5C1224.8,859.6 1224.8,859.3 1226.3,860.5C1227.8,861.7 1229.5,866.2 1231.9,867.9C1234.3,869.7 1237.5,870.6 1240.9,871.1C1244.3,871.6 1247.3,871.0 1252.2,871.1C1257.0,871.2 1264.5,871.6 1270.2,871.8C1275.8,871.9 1282.2,872.4 1285.9,872.2C1289.7,872.0 1287.8,870.8 1292.7,870.6C1297.6,870.5 1309.6,871.3 1315.2,871.3C1320.9,871.3 1322.0,870.7 1326.5,870.6C1331.0,870.5 1337.9,871.0 1342.3,870.6C1346.6,870.3 1349.4,869.7 1352.4,868.4C1355.4,867.1 1359.0,863.7 1360.3,862.7" fill="none" stroke="#1e90ff" stroke-width="1.05" stroke-linejoin="round"/>
<path d="M801.0,868.8C803.6,868.8 809.6,868.7 816.8,868.8C823.9,868.9 837.8,869.7 843.8,869.5C849.8,869.4 850.2,868.8 852.8,867.9C855.4,867.1 857.3,864.2 859.5,864.3C861.8,864.5 860.7,868.1 866.3,868.8C871.9,869.6 887.7,869.3 893.3,868.8C899.0,868.4 897.8,866.1 900.1,866.1C902.3,866.2 899.3,868.9 906.8,869.3C914.4,869.7 935.8,868.8 945.1,868.4C954.5,867.9 958.8,867.3 963.2,866.6C967.5,865.9 968.0,864.4 971.0,864.3C974.0,864.2 975.7,866.0 981.2,866.1C986.6,866.2 997.3,865.6 1003.7,865.0C1010.1,864.4 1015.0,864.0 1019.5,862.7C1024.0,861.5 1027.0,859.8 1030.7,857.6C1034.5,855.3 1038.6,853.1 1042.0,849.2C1045.4,845.4 1048.4,840.2 1051.0,834.6C1053.6,829.0 1055.7,823.1 1057.7,815.5C1059.8,807.8 1061.7,801.0 1063.4,788.4C1065.1,775.8 1066.6,757.4 1067.9,740.0C1069.2,722.6 1070.5,696.7 1071.3,684.0C1072.1,671.3 1072.3,670.1 1072.9,663.7C1073.5,657.3 1074.2,651.2 1074.7,645.8C1075.2,640.4 1075.3,634.7 1075.9,631.4C1076.5,628.1 1077.6,626.0 1078.3,626.0C1079.0,626.0 1079.3,627.9 1080.0,631.4C1080.7,634.9 1081.6,640.6 1082.5,647.0C1083.4,653.4 1084.4,660.9 1085.5,669.7C1086.6,678.5 1087.7,687.9 1089.0,699.6C1090.3,711.3 1091.7,725.8 1093.4,740.0C1095.0,754.2 1096.6,771.5 1099.0,785.0C1101.4,798.6 1105.0,812.1 1108.0,821.1C1111.0,830.1 1114.0,834.2 1117.0,839.1C1120.0,844.0 1122.7,847.2 1126.0,850.4C1129.4,853.6 1133.5,856.3 1137.3,858.2C1141.1,860.2 1145.2,861.1 1148.6,862.1C1151.9,863.0 1152.3,863.3 1157.6,863.9C1162.8,864.4 1172.6,865.0 1180.1,865.5C1187.6,865.9 1195.1,866.3 1202.6,866.6C1210.1,866.9 1217.6,867.0 1225.1,867.3C1232.6,867.5 1240.2,867.7 1247.7,867.9C1255.2,868.2 1264.2,868.8 1270.2,868.8C1276.2,868.8 1278.8,867.9 1283.7,867.9C1288.6,868.0 1294.8,869.5 1299.5,869.3C1304.2,869.1 1308.5,866.8 1311.8,866.8C1315.2,866.8 1315.4,869.0 1319.7,869.5C1324.0,870.0 1332.5,870.1 1337.7,870.0C1343.0,869.8 1347.5,868.4 1351.3,868.4C1355.0,868.4 1358.8,869.7 1360.3,870.0" fill="none" stroke="#da70d6" stroke-width="1.05" stroke-linejoin="round"/>
<path d="M801.0,869.7C803.6,869.7 807.7,869.4 816.8,869.5C825.8,869.6 841.2,870.2 855.0,870.2C868.9,870.2 888.8,869.8 900.1,869.5C911.4,869.2 917.4,869.2 922.6,868.4C927.9,867.5 928.6,864.4 931.6,864.3C934.6,864.2 934.6,867.4 940.6,867.9C946.6,868.4 959.4,867.6 967.7,867.3C975.9,866.9 982.7,866.4 990.2,865.7C997.7,864.9 1006.7,864.0 1012.7,862.7C1018.7,861.5 1021.7,860.3 1026.2,858.2C1030.7,856.2 1036.0,853.6 1039.7,850.4C1043.5,847.2 1045.7,844.4 1048.7,839.1C1051.7,833.8 1055.3,827.1 1057.7,818.8C1060.2,810.6 1061.7,802.7 1063.4,789.5C1065.1,776.4 1066.7,755.0 1067.9,740.0C1069.1,725.0 1069.4,712.3 1070.5,699.6C1071.6,686.9 1073.4,674.1 1074.7,663.7C1076.0,653.3 1077.1,645.8 1078.3,637.4C1079.5,629.0 1080.7,620.4 1081.9,613.5C1083.1,606.6 1084.9,598.9 1085.5,596.0L1085.5,596.0C1085.8,597.6 1086.6,600.0 1087.2,605.7C1087.8,611.4 1088.4,621.5 1089.0,630.2C1089.6,638.9 1090.1,646.2 1090.8,657.8C1091.5,669.4 1092.2,685.9 1093.2,699.6C1094.2,713.3 1095.4,726.5 1096.8,740.0C1098.1,753.5 1099.2,767.4 1101.3,780.5C1103.3,793.7 1106.5,809.4 1109.1,818.8C1111.8,828.2 1114.2,832.0 1117.0,836.8C1119.8,841.7 1122.7,844.9 1126.0,848.1C1129.4,851.3 1133.5,853.9 1137.3,856.0C1141.1,858.1 1145.2,859.3 1148.6,860.5C1151.9,861.7 1153.1,862.6 1157.6,863.4C1162.1,864.2 1170.0,865.0 1175.6,865.5C1181.2,865.9 1186.8,865.8 1191.4,866.1C1195.9,866.5 1198.5,867.5 1202.6,867.7C1206.7,867.9 1212.7,867.5 1216.1,867.3C1219.5,867.0 1220.6,866.0 1222.9,866.1C1225.1,866.2 1226.3,867.6 1229.6,867.9C1233.0,868.3 1239.8,868.9 1243.2,868.4C1246.5,867.9 1247.7,865.2 1249.9,865.0C1252.2,864.8 1253.3,866.6 1256.7,867.3C1260.0,867.9 1264.9,868.6 1270.2,868.8C1275.4,869.1 1282.2,868.6 1288.2,868.8C1294.2,869.1 1301.0,870.0 1306.2,870.2C1311.5,870.4 1316.0,870.2 1319.7,870.0C1323.5,869.7 1325.7,868.9 1328.7,868.8C1331.7,868.8 1335.3,869.6 1337.7,869.5C1340.2,869.4 1341.1,868.3 1343.4,868.4C1345.6,868.5 1348.4,869.6 1351.3,870.0C1354.1,870.3 1358.8,870.5 1360.3,870.6" fill="none" stroke="#3cb371" stroke-width="1.05" stroke-linejoin="round"/>
<path d="M812.5,889V895" stroke="#4a4a4a"/>
<path d="M830.5,889V893" stroke="#8c8c8c"/>
<path d="M848.5,889V893" stroke="#8c8c8c"/>
<path d="M867.5,889V893" stroke="#8c8c8c"/>
<path d="M885.5,889V893" stroke="#8c8c8c"/>
<path d="M903.5,889V895" stroke="#4a4a4a"/>
<path d="M921.5,889V893" stroke="#8c8c8c"/>
<path d="M940.5,889V893" stroke="#8c8c8c"/>
<path d="M958.5,889V893" stroke="#8c8c8c"/>
<path d="M976.5,889V893" stroke="#8c8c8c"/>
<path d="M995.5,889V895" stroke="#4a4a4a"/>
<path d="M1013.5,889V893" stroke="#8c8c8c"/>
<path d="M1031.5,889V893" stroke="#8c8c8c"/>
<path d="M1049.5,889V893" stroke="#8c8c8c"/>
<path d="M1068.5,889V893" stroke="#8c8c8c"/>
<path d="M1086.5,889V895" stroke="#4a4a4a"/>
<path d="M1104.5,889V893" stroke="#8c8c8c"/>
<path d="M1122.5,889V893" stroke="#8c8c8c"/>
<path d="M1141.5,889V893" stroke="#8c8c8c"/>
<path d="M1159.5,889V893" stroke="#8c8c8c"/>
<path d="M1177.5,889V895" stroke="#4a4a4a"/>
<path d="M1196.5,889V893" stroke="#8c8c8c"/>
<path d="M1214.5,889V893" stroke="#8c8c8c"/>
<path d="M1232.5,889V893" stroke="#8c8c8c"/>
<path d="M1250.5,889V893" stroke="#8c8c8c"/>
<path d="M1269.5,889V895" stroke="#4a4a4a"/>
<path d="M1287.5,889V893" stroke="#8c8c8c"/>
<path d="M1305.5,889V893" stroke="#8c8c8c"/>
<path d="M1324.5,889V893" stroke="#8c8c8c"/>
<path d="M1342.5,889V893" stroke="#8c8c8c"/>
<path d="M1360.5,889V895" stroke="#4a4a4a"/>
<path d="M700,565.5H1360.5V888.5H700" fill="none" stroke="#4a4a4a"/>
<path d="M990.5,566V888" stroke="#e00000" stroke-width="1"/>
<path d="M1213,584.0H1235" stroke="#1e90ff" stroke-width="2"/>
<path d="M1213,598.0H1235" stroke="#da70d6" stroke-width="2"/>
<path d="M1213,612.0H1235" stroke="#3cb371" stroke-width="2"/></g>
</svg>
<span class="t" style="left:139.31px;top:440px;font-size:12px;line-height:15px;">0</span>
<span class="t" style="left:114.20px;top:404px;font-size:12px;line-height:15px;letter-spacing:0.165px;">1E-11</span>
<span class="t" style="left:114.20px;top:368px;font-size:12px;line-height:15px;letter-spacing:0.165px;">2E-11</span>
<span class="t" style="left:114.20px;top:332px;font-size:12px;line-height:15px;letter-spacing:0.165px;">3E-11</span>
<span class="t" style="left:114.20px;top:296px;font-size:12px;line-height:15px;letter-spacing:0.165px;">4E-11</span>
<span class="t" style="left:114.20px;top:260px;font-size:12px;line-height:15px;letter-spacing:0.165px;">5E-11</span>
<span class="t" style="left:114.20px;top:224px;font-size:12px;line-height:15px;letter-spacing:0.165px;">6E-11</span>
<span class="t" style="left:114.20px;top:187px;font-size:12px;line-height:15px;letter-spacing:0.165px;">7E-11</span>
<span class="t" style="left:114.20px;top:151px;font-size:12px;line-height:15px;letter-spacing:0.165px;">8E-11</span>
<span class="t" style="left:114.20px;top:115px;font-size:12px;line-height:15px;letter-spacing:0.165px;">9E-11</span>
<span class="t" style="left:175.15px;top:453px;font-size:12px;line-height:15px;">4300</span>
<span class="t" style="left:279.15px;top:453px;font-size:12px;line-height:15px;">4400</span>
<span class="t" style="left:383.15px;top:453px;font-size:12px;line-height:15px;">4500</span>
<span class="t" style="left:487.15px;top:453px;font-size:12px;line-height:15px;">4600</span>
<span class="t" style="left:592.15px;top:453px;font-size:12px;line-height:15px;">4700</span>
<span class="t" style="left:696.15px;top:453px;font-size:12px;line-height:15px;">4800</span>
<span class="t" style="left:800.15px;top:453px;font-size:12px;line-height:15px;">4900</span>
<span class="t" style="left:904.15px;top:453px;font-size:12px;line-height:15px;">5000</span>
<span class="t" style="left:1008.15px;top:453px;font-size:12px;line-height:15px;">5100</span>
<span class="t" style="left:1113.15px;top:453px;font-size:12px;line-height:15px;">5200</span>
<span class="t" style="left:1217.15px;top:453px;font-size:12px;line-height:15px;">5300</span>
<span class="t" style="left:1321.15px;top:453px;font-size:12px;line-height:15px;">5400</span>
<span class="t" style="left:208.60px;top:261px;font-size:11.5px;line-height:14px;letter-spacing:-0.933px;">Hgamma</span>
<span class="t" style="left:210.15px;top:273px;font-size:11.5px;line-height:14px;letter-spacing:-0.381px;">4340.46</span>
<span class="t" style="left:270.11px;top:346px;font-size:11.5px;line-height:14px;letter-spacing:-0.703px;">He I</span>
<span class="t" style="left:263.17px;top:358px;font-size:11.5px;line-height:14px;letter-spacing:-0.387px;">4387.9</span>
<span class="t" style="left:295.37px;top:318px;font-size:11.5px;line-height:14px;letter-spacing:-0.490px;">[Fe II]</span>
<span class="t" style="left:296.71px;top:330px;font-size:11.5px;line-height:14px;letter-spacing:-0.469px;">4416</span>
<span class="t" style="left:357.11px;top:321px;font-size:11.5px;line-height:14px;letter-spacing:-0.703px;">He I</span>
<span class="t" style="left:347.15px;top:333px;font-size:11.5px;line-height:14px;letter-spacing:-0.381px;">4471.48</span>
<span class="t" style="left:401.24px;top:344px;font-size:11.5px;line-height:14px;letter-spacing:-0.575px;">Fe II</span>
<span class="t" style="left:399.71px;top:356px;font-size:11.5px;line-height:14px;letter-spacing:-0.469px;">4515</span>
<span class="t" style="left:428.67px;top:307px;font-size:11.5px;line-height:14px;letter-spacing:-0.607px;">He II</span>
<span class="t" style="left:420.15px;top:319px;font-size:11.5px;line-height:14px;letter-spacing:-0.381px;">4541.59</span>
<span class="t" style="left:473.24px;top:333px;font-size:11.5px;line-height:14px;letter-spacing:-0.575px;">Fe II</span>
<span class="t" style="left:471.71px;top:345px;font-size:11.5px;line-height:14px;letter-spacing:-0.469px;">4584</span>
<span class="t" style="left:578.67px;top:135px;font-size:11.5px;line-height:14px;letter-spacing:-0.607px;">He II</span>
<span class="t" style="left:570.15px;top:147px;font-size:11.5px;line-height:14px;letter-spacing:-0.381px;">4685.68</span>
<span class="t" style="left:608.11px;top:325px;font-size:11.5px;line-height:14px;letter-spacing:-0.703px;">He I</span>
<span class="t" style="left:598.15px;top:337px;font-size:11.5px;line-height:14px;letter-spacing:-0.381px;">4713.15</span>
<span class="t" style="left:758.79px;top:126px;font-size:11.5px;line-height:14px;letter-spacing:-0.767px;">Hbeta</span>
<span class="t" style="left:750.13px;top:138px;font-size:11.5px;line-height:14px;letter-spacing:-0.377px;">4861.363</span>
<span class="t" style="left:826.11px;top:308px;font-size:11.5px;line-height:14px;letter-spacing:-0.703px;">He I</span>
<span class="t" style="left:816.15px;top:320px;font-size:11.5px;line-height:14px;letter-spacing:-0.381px;">4921.93</span>
<span class="t" style="left:923.11px;top:305px;font-size:11.5px;line-height:14px;letter-spacing:-0.703px;">He I</span>
<span class="t" style="left:913.15px;top:317px;font-size:11.5px;line-height:14px;letter-spacing:-0.381px;">5015.68</span>
<span class="t" style="left:957.11px;top:334px;font-size:11.5px;line-height:14px;letter-spacing:-0.703px;">He I</span>
<span class="t" style="left:947.15px;top:346px;font-size:11.5px;line-height:14px;letter-spacing:-0.381px;">5047.74</span>
<span class="t" style="left:1082.24px;top:329px;font-size:11.5px;line-height:14px;letter-spacing:-0.575px;">Fe II</span>
<span class="t" style="left:1080.71px;top:341px;font-size:11.5px;line-height:14px;letter-spacing:-0.469px;">5169</span>
<span class="t" style="left:1112.24px;top:331px;font-size:11.5px;line-height:14px;letter-spacing:-0.575px;">Fe II</span>
<span class="t" style="left:1110.71px;top:343px;font-size:11.5px;line-height:14px;letter-spacing:-0.469px;">5198</span>
<span class="t" style="left:1151.24px;top:336px;font-size:11.5px;line-height:14px;letter-spacing:-0.575px;">Fe II</span>
<span class="t" style="left:1149.71px;top:348px;font-size:11.5px;line-height:14px;letter-spacing:-0.469px;">5235</span>
<span class="t" style="left:1194.24px;top:336px;font-size:11.5px;line-height:14px;letter-spacing:-0.575px;">Fe II</span>
<span class="t" style="left:1192.71px;top:348px;font-size:11.5px;line-height:14px;letter-spacing:-0.469px;">5276</span>
<span class="t" style="left:1202.24px;top:300px;font-size:11.5px;line-height:14px;letter-spacing:-0.575px;">Fe II</span>
<span class="t" style="left:1200.71px;top:312px;font-size:11.5px;line-height:14px;letter-spacing:-0.469px;">5284</span>
<span class="t" style="left:1236.24px;top:330px;font-size:11.5px;line-height:14px;letter-spacing:-0.575px;">Fe II</span>
<span class="t" style="left:1234.71px;top:342px;font-size:11.5px;line-height:14px;letter-spacing:-0.469px;">5317</span>
<span class="t" style="left:1284.24px;top:337px;font-size:11.5px;line-height:14px;letter-spacing:-0.575px;">Fe II</span>
<span class="t" style="left:1282.71px;top:349px;font-size:11.5px;line-height:14px;letter-spacing:-0.469px;">5363</span>
<span class="t" style="left:1334.67px;top:329px;font-size:11.5px;line-height:14px;letter-spacing:-0.607px;">He II</span>
<span class="t" style="left:1326.56px;top:341px;font-size:11.5px;line-height:14px;letter-spacing:-0.373px;">5411.52</span>
<span class="t" style="left:564.00px;top:91px;font-size:14px;line-height:18px;font-weight:700;letter-spacing:-0.129px;">AG Peg_p</span>
<span class="t" style="left:642.30px;top:91px;font-size:14px;line-height:18px;font-weight:700;letter-spacing:0.194px;">2015-06-30.251</span>
<span class="t" style="left:754.50px;top:91px;font-size:14px;line-height:18px;font-weight:700;letter-spacing:-0.349px;">7 x 500 s</span>
<span class="t" style="left:820.30px;top:91px;font-size:14px;line-height:18px;font-weight:700;letter-spacing:-0.705px;">tlester</span>
<span class="t" style="left:691.15px;top:474px;font-size:13px;line-height:16px;letter-spacing:-0.055px;">Wavelength (Angstom)</span>
<span class="t" style="left:34.25px;top:275.4px;font-size:13px;line-height:16px;letter-spacing:0.072px;transform:rotate(-90deg);">Relative intensity</span>
<span class="t" style="left:111.81px;top:882px;font-size:12px;line-height:15px;">0</span>
<span class="t" style="left:86.47px;top:828px;font-size:12px;line-height:15px;">5E-12</span>
<span class="t" style="left:87.36px;top:775px;font-size:12px;line-height:15px;">1E-11</span>
<span class="t" style="left:77.36px;top:721px;font-size:12px;line-height:15px;">1.5E-11</span>
<span class="t" style="left:87.36px;top:667px;font-size:12px;line-height:15px;">2E-11</span>
<span class="t" style="left:77.36px;top:613px;font-size:12px;line-height:15px;">2.5E-11</span>
<span class="t" style="left:87.36px;top:559px;font-size:12px;line-height:15px;">3E-11</span>
<span class="t" style="left:173.25px;top:896px;font-size:12px;line-height:15px;">4310</span>
<span class="t" style="left:242.25px;top:896px;font-size:12px;line-height:15px;">4320</span>
<span class="t" style="left:311.25px;top:896px;font-size:12px;line-height:15px;">4330</span>
<span class="t" style="left:217.70px;top:525px;font-size:14px;line-height:18px;font-weight:700;letter-spacing:-0.129px;">AG Peg_p</span>
<span class="t" style="left:296.00px;top:525px;font-size:14px;line-height:18px;font-weight:700;letter-spacing:0.194px;">2015-06-30.251</span>
<span class="t" style="left:408.20px;top:525px;font-size:14px;line-height:18px;font-weight:700;letter-spacing:-0.349px;">7 x 500 s</span>
<span class="t" style="left:474.00px;top:525px;font-size:14px;line-height:18px;font-weight:700;letter-spacing:-0.705px;">tlester</span>
<span class="t" style="left:10.00px;top:719px;font-size:13px;line-height:16px;letter-spacing:0.046px;transform:rotate(-90deg);">relative intensity</span>
<span class="t" style="left:796.55px;top:896px;font-size:12px;line-height:15px;">-1500</span>
<span class="t" style="left:887.55px;top:896px;font-size:12px;line-height:15px;">-1000</span>
<span class="t" style="left:982.88px;top:896px;font-size:12px;line-height:15px;">-500</span>
<span class="t" style="left:1166.88px;top:896px;font-size:12px;line-height:15px;">500</span>
<span class="t" style="left:1255.55px;top:896px;font-size:12px;line-height:15px;">1000</span>
<span class="t" style="left:1346.55px;top:896px;font-size:12px;line-height:15px;">1500</span>
<span class="t" style="left:1240.00px;top:578px;font-size:12px;line-height:15px;letter-spacing:-0.731px;">Hgamma  4340.46</span>
<span class="t" style="left:1240.00px;top:592px;font-size:12px;line-height:15px;letter-spacing:-0.607px;">He II  4685.68</span>
<span class="t" style="left:1240.00px;top:606px;font-size:12px;line-height:15px;letter-spacing:-0.661px;">Hbeta  4861.363</span>
<span class="t" style="left:910.00px;top:525px;font-size:14px;line-height:18px;font-weight:700;letter-spacing:-0.129px;">AG Peg_p</span>
<span class="t" style="left:988.30px;top:525px;font-size:14px;line-height:18px;font-weight:700;letter-spacing:0.194px;">2015-06-30.251</span>
<span class="t" style="left:1100.50px;top:525px;font-size:14px;line-height:18px;font-weight:700;letter-spacing:-0.349px;">7 x 500 s</span>
<span class="t" style="left:1166.30px;top:525px;font-size:14px;line-height:18px;font-weight:700;letter-spacing:-0.705px;">tlester</span>
<span class="t" style="left:1035.00px;top:917px;font-size:13px;line-height:16px;letter-spacing:0.161px;">Velocity (Km/sec)</span>
</div>
<div class="layer" id="dialog">
<div style="left:19px;top:12px;width:1384px;height:941px;overflow:hidden;"><div style="left:316px;top:525px;width:481px;height:453px;box-shadow:0 3px 16px 2px rgba(0,0,0,.42);"></div></div>
<div style="left:334px;top:536px;width:483px;height:455px;background:#f0f0f0;border:1px solid;border-color:#8e8e8e #8a8a8a #f6f6f6 #c4c4c4;box-sizing:border-box;"></div>
<div style="left:335px;top:537px;width:481px;height:30px;background:#fff;"></div>
<svg class="abs" style="left:790px;top:541px" width="22" height="20" viewBox="790 541 22 20"><path d="M796,546L806,556M806,546L796,556" fill="none" stroke="#2b2b2b" stroke-width="1"/></svg>
<div style="left:416px;top:567px;width:1px;height:21px;background:#a8a8a8;"></div>
<div style="left:494px;top:567px;width:1px;height:21px;background:#a8a8a8;"></div>
<div style="left:422px;top:567px;width:67px;height:21px;background:#f7f7f7;border:1px solid #fafafa;border-top:1px solid #585858;border-left:1px solid #585858;box-shadow:inset 1px 1px 0 #8e8e8e;box-sizing:border-box;"></div>
<div style="left:345px;top:605px;width:459px;height:39px;border:1px solid #dcdcdc;box-sizing:border-box;"></div>
<div style="left:352px;top:599px;width:42px;height:13px;background:#f0f0f0;"></div>
<svg class="abs" style="left:351px;top:618px" width="13" height="13" viewBox="0 0 13 13"><rect x=".5" y=".5" width="12" height="12" fill="#fff" stroke="#333"/><path d="M2.3,6.4L5,9.2L10.7,3.4" fill="none" stroke="#333" stroke-width="1.25"/></svg>
<svg class="abs" style="left:454px;top:618px" width="13" height="13" viewBox="0 0 13 13"><rect x=".5" y=".5" width="12" height="12" fill="#fff" stroke="#333"/><path d="M2.3,6.4L5,9.2L10.7,3.4" fill="none" stroke="#333" stroke-width="1.25"/></svg>
<div style="left:687px;top:618px;width:54px;height:20px;background:#fff;border:1px solid #3c3c3c;box-sizing:border-box;"></div>
<div style="left:345px;top:657px;width:227px;height:280px;border:1px solid #dcdcdc;box-sizing:border-box;"></div>
<div style="left:351px;top:651px;width:53px;height:13px;background:#f0f0f0;"></div>
<div style="left:351px;top:670px;width:215px;height:207px;background:#fff;border:1px solid #828790;box-sizing:border-box;overflow:hidden;"></div>
<div style="left:432px;top:672px;width:1px;height:24px;background:#e5e5e5;"></div>
<div style="left:489px;top:672px;width:1px;height:24px;background:#e5e5e5;"></div>
<div style="left:546px;top:672px;width:1px;height:24px;background:#e5e5e5;"></div>
<div style="left:353px;top:712px;width:194px;height:1px;background:#f0f0f0;"></div>
<div style="left:353px;top:729px;width:194px;height:1px;background:#f0f0f0;"></div>
<div style="left:353px;top:746px;width:194px;height:1px;background:#f0f0f0;"></div>
<div style="left:353px;top:763px;width:194px;height:1px;background:#f0f0f0;"></div>
<div style="left:353px;top:780px;width:194px;height:1px;background:#f0f0f0;"></div>
<div style="left:353px;top:797px;width:194px;height:1px;background:#f0f0f0;"></div>
<div style="left:353px;top:814px;width:194px;height:1px;background:#f0f0f0;"></div>
<div style="left:353px;top:831px;width:194px;height:1px;background:#f0f0f0;"></div>
<div style="left:353px;top:848px;width:194px;height:1px;background:#f0f0f0;"></div>
<div style="left:353px;top:865px;width:194px;height:1px;background:#f0f0f0;"></div>
<div style="left:432.5px;top:696px;width:1px;height:180px;background:#f0f0f0;"></div>
<div style="left:489.5px;top:696px;width:1px;height:180px;background:#f0f0f0;"></div>
<div style="left:548px;top:672px;width:16px;height:203px;background:#f0f0f0;"></div>
<div style="left:548px;top:689px;width:15px;height:20px;background:#cdcdcd;"></div>
<svg class="abs" style="left:549.5px;top:677px" width="12" height="8" viewBox="0 0 12 8"><path d="M2.9,6.1L6,2.6L9.1,6.1" fill="none" stroke="#404040" stroke-width="2"/></svg>
<svg class="abs" style="left:549.5px;top:863px" width="12" height="8" viewBox="0 0 12 8"><path d="M2.9,1.9L6,5.4L9.1,1.9" fill="none" stroke="#404040" stroke-width="2"/></svg>
<div style="left:352px;top:884px;width:73px;height:40px;background:#e1e1e1;border:1px solid #adadad;box-sizing:border-box;"></div>
<div style="left:492px;top:884px;width:73px;height:21px;background:#e1e1e1;border:1px solid #adadad;box-sizing:border-box;"></div>
<div style="left:578px;top:657px;width:227px;height:280px;border:1px solid #dcdcdc;box-sizing:border-box;"></div>
<div style="left:584px;top:651px;width:54px;height:13px;background:#f0f0f0;"></div>
<div style="left:584px;top:670px;width:215px;height:207px;background:#fff;border:1px solid #828790;box-sizing:border-box;overflow:hidden;"></div>
<div style="left:665px;top:672px;width:1px;height:24px;background:#e5e5e5;"></div>
<div style="left:722px;top:672px;width:1px;height:24px;background:#e5e5e5;"></div>
<div style="left:779px;top:672px;width:1px;height:24px;background:#e5e5e5;"></div>
<div style="left:586px;top:712px;width:194px;height:1px;background:#f0f0f0;"></div>
<div style="left:586px;top:729px;width:194px;height:1px;background:#f0f0f0;"></div>
<div style="left:586px;top:746px;width:194px;height:1px;background:#f0f0f0;"></div>
<div style="left:586px;top:763px;width:194px;height:1px;background:#f0f0f0;"></div>
<div style="left:586px;top:780px;width:194px;height:1px;background:#f0f0f0;"></div>
<div style="left:586px;top:797px;width:194px;height:1px;background:#f0f0f0;"></div>
<div style="left:586px;top:814px;width:194px;height:1px;background:#f0f0f0;"></div>
<div style="left:586px;top:831px;width:194px;height:1px;background:#f0f0f0;"></div>
<div style="left:586px;top:848px;width:194px;height:1px;background:#f0f0f0;"></div>
<div style="left:586px;top:865px;width:194px;height:1px;background:#f0f0f0;"></div>
<div style="left:665.5px;top:696px;width:1px;height:180px;background:#f0f0f0;"></div>
<div style="left:722.5px;top:696px;width:1px;height:180px;background:#f0f0f0;"></div>
<div style="left:781px;top:672px;width:16px;height:203px;background:#f0f0f0;"></div>
<div style="left:781px;top:689px;width:15px;height:80px;background:#cdcdcd;"></div>
<svg class="abs" style="left:782.5px;top:677px" width="12" height="8" viewBox="0 0 12 8"><path d="M2.9,6.1L6,2.6L9.1,6.1" fill="none" stroke="#404040" stroke-width="2"/></svg>
<svg class="abs" style="left:782.5px;top:863px" width="12" height="8" viewBox="0 0 12 8"><path d="M2.9,1.9L6,5.4L9.1,1.9" fill="none" stroke="#404040" stroke-width="2"/></svg>
<div style="left:584px;top:883px;width:78px;height:20px;background:#fff;border:1px solid #3c3c3c;box-sizing:border-box;"></div>
<div style="left:668px;top:883px;width:54px;height:20px;background:#fff;border:1px solid #3c3c3c;box-sizing:border-box;"></div>
<div style="left:728px;top:883px;width:54px;height:20px;background:#fff;border:1px solid #3c3c3c;box-sizing:border-box;"></div>
<div style="left:585px;top:910px;width:73px;height:21px;background:#e1e1e1;border:1px solid #adadad;box-sizing:border-box;"></div>
<div style="left:725px;top:910px;width:73px;height:21px;background:#e1e1e1;border:1px solid #adadad;box-sizing:border-box;"></div>
<div style="left:349px;top:956px;width:73px;height:21px;background:#e1e1e1;border:1px solid #adadad;box-sizing:border-box;"></div>
<div style="left:731px;top:955px;width:73px;height:23px;background:#e1e1e1;border:2px solid #0078d7;box-sizing:border-box;"></div>
<span class="t" style="left:343.50px;top:546px;font-size:12px;line-height:15px;letter-spacing:0.058px;color:#000;">Main plot setup</span>
<span class="t" style="left:343.50px;top:570px;font-size:12px;line-height:15px;letter-spacing:-0.679px;">Title and Axis</span>
<span class="t" style="left:429.20px;top:571px;font-size:12px;line-height:15px;letter-spacing:-0.839px;">Annotations</span>
<span class="t" style="left:354.00px;top:599px;font-size:12px;line-height:15px;letter-spacing:-0.837px;">Settings</span>
<span class="t" style="left:370.20px;top:618px;font-size:12px;line-height:15px;letter-spacing:-0.979px;">Arrowhead</span>
<span class="t" style="left:472.40px;top:618px;font-size:12px;line-height:15px;letter-spacing:-0.599px;">include wavelength</span>
<span class="t" style="left:606.20px;top:621px;font-size:12px;line-height:15px;letter-spacing:-0.729px;">Annotation shift</span>
<span class="t" style="left:690.00px;top:621px;font-size:12px;line-height:15px;letter-spacing:-1.172px;">-4</span>
<span class="t" style="left:751.20px;top:621px;font-size:12px;line-height:15px;letter-spacing:-0.703px;">Km/sec</span>
<span class="t" style="left:353.50px;top:651px;font-size:12px;line-height:15px;letter-spacing:-0.786px;">Choice list</span>
<span class="t" style="left:359.10px;top:677px;font-size:12px;line-height:15px;letter-spacing:-0.737px;">Spectral line</span>
<span class="t" style="left:439.30px;top:677px;font-size:12px;line-height:15px;letter-spacing:-0.702px;">Wave1</span>
<span class="t" style="left:496.20px;top:677px;font-size:12px;line-height:15px;letter-spacing:-0.577px;">Wave2</span>
<span class="t" style="left:359.10px;top:698px;font-size:12px;line-height:15px;letter-spacing:-0.379px;">[Ne III]</span>
<span class="t" style="left:439.30px;top:698px;font-size:12px;line-height:15px;letter-spacing:-0.542px;">3868.76</span>
<span class="t" style="left:359.10px;top:715px;font-size:12px;line-height:15px;letter-spacing:-0.588px;">Hzeta</span>
<span class="t" style="left:439.30px;top:715px;font-size:12px;line-height:15px;letter-spacing:-0.542px;">3889.05</span>
<span class="t" style="left:359.10px;top:732px;font-size:12px;line-height:15px;letter-spacing:-0.475px;">Ca II</span>
<span class="t" style="left:439.30px;top:732px;font-size:12px;line-height:15px;letter-spacing:-0.542px;">3933.66</span>
<span class="t" style="left:359.10px;top:749px;font-size:12px;line-height:15px;letter-spacing:-0.379px;">[Ne III]</span>
<span class="t" style="left:439.30px;top:749px;font-size:12px;line-height:15px;letter-spacing:-0.542px;">3967.47</span>
<span class="t" style="left:359.10px;top:766px;font-size:12px;line-height:15px;letter-spacing:-0.475px;">Ca II</span>
<span class="t" style="left:439.30px;top:766px;font-size:12px;line-height:15px;letter-spacing:-0.542px;">3968.47</span>
<span class="t" style="left:359.10px;top:783px;font-size:12px;line-height:15px;letter-spacing:-0.500px;">Hepsilon</span>
<span class="t" style="left:439.30px;top:783px;font-size:12px;line-height:15px;letter-spacing:-0.542px;">3970.07</span>
<span class="t" style="left:359.10px;top:800px;font-size:12px;line-height:15px;letter-spacing:-0.550px;">He I</span>
<span class="t" style="left:439.30px;top:800px;font-size:12px;line-height:15px;letter-spacing:-0.542px;">4009.27</span>
<span class="t" style="left:359.10px;top:817px;font-size:12px;line-height:15px;letter-spacing:-0.550px;">He I</span>
<span class="t" style="left:439.30px;top:817px;font-size:12px;line-height:15px;letter-spacing:-0.551px;">4025.5</span>
<span class="t" style="left:359.10px;top:834px;font-size:12px;line-height:15px;letter-spacing:-0.370px;">[S II]</span>
<span class="t" style="left:439.30px;top:834px;font-size:12px;line-height:15px;letter-spacing:-0.551px;">4068.6</span>
<span class="t" style="left:359.10px;top:851px;font-size:12px;line-height:15px;letter-spacing:-0.480px;">[Fe V]</span>
<span class="t" style="left:439.30px;top:851px;font-size:12px;line-height:15px;letter-spacing:-0.668px;">4071</span>
<span class="t" style="left:359.10px;top:868px;font-size:12px;line-height:15px;letter-spacing:-0.520px;height:7.0px;overflow:hidden;">Hdelta</span>
<span class="t" style="left:439.30px;top:868px;font-size:12px;line-height:15px;letter-spacing:-0.542px;height:7.0px;overflow:hidden;">4101.73</span>
<span class="t" style="left:362.50px;top:891px;font-size:12px;line-height:15px;letter-spacing:-0.858px;">Open new</span>
<span class="t" style="left:381.20px;top:904px;font-size:12px;line-height:15px;letter-spacing:-0.824px;">list</span>
<span class="t" style="left:510.80px;top:888px;font-size:12px;line-height:15px;letter-spacing:-0.881px;">Add &gt;&gt;</span>
<span class="t" style="left:587.00px;top:651px;font-size:12px;line-height:15px;letter-spacing:-0.851px;">Display list</span>
<span class="t" style="left:592.10px;top:677px;font-size:12px;line-height:15px;letter-spacing:-0.746px;">Spectral line</span>
<span class="t" style="left:672.10px;top:677px;font-size:12px;line-height:15px;letter-spacing:-0.727px;">Wave1</span>
<span class="t" style="left:729.30px;top:677px;font-size:12px;line-height:15px;letter-spacing:-0.602px;">Wave2</span>
<span class="t" style="left:592.10px;top:698px;font-size:12px;line-height:15px;letter-spacing:-0.730px;">Hgamma</span>
<span class="t" style="left:672.10px;top:698px;font-size:12px;line-height:15px;letter-spacing:-0.542px;">4340.46</span>
<span class="t" style="left:592.10px;top:715px;font-size:12px;line-height:15px;letter-spacing:-0.550px;">He I</span>
<span class="t" style="left:672.10px;top:715px;font-size:12px;line-height:15px;letter-spacing:-0.551px;">4387.9</span>
<span class="t" style="left:592.10px;top:732px;font-size:12px;line-height:15px;letter-spacing:-0.384px;">[Fe II]</span>
<span class="t" style="left:672.10px;top:732px;font-size:12px;line-height:15px;letter-spacing:-0.668px;">4416</span>
<span class="t" style="left:592.10px;top:749px;font-size:12px;line-height:15px;letter-spacing:-0.550px;">He I</span>
<span class="t" style="left:672.10px;top:749px;font-size:12px;line-height:15px;letter-spacing:-0.542px;">4471.48</span>
<span class="t" style="left:592.10px;top:766px;font-size:12px;line-height:15px;letter-spacing:-0.450px;">Fe II</span>
<span class="t" style="left:672.10px;top:766px;font-size:12px;line-height:15px;letter-spacing:-0.668px;">4515</span>
<span class="t" style="left:592.10px;top:783px;font-size:12px;line-height:15px;letter-spacing:-0.475px;">He II</span>
<span class="t" style="left:672.10px;top:783px;font-size:12px;line-height:15px;letter-spacing:-0.542px;">4541.59</span>
<span class="t" style="left:592.10px;top:800px;font-size:12px;line-height:15px;letter-spacing:-0.450px;">Fe II</span>
<span class="t" style="left:672.10px;top:800px;font-size:12px;line-height:15px;letter-spacing:-0.668px;">4584</span>
<span class="t" style="left:592.10px;top:817px;font-size:12px;line-height:15px;letter-spacing:-0.475px;">He II</span>
<span class="t" style="left:672.10px;top:817px;font-size:12px;line-height:15px;letter-spacing:-0.542px;">4685.68</span>
<span class="t" style="left:592.10px;top:834px;font-size:12px;line-height:15px;letter-spacing:-0.550px;">He I</span>
<span class="t" style="left:672.10px;top:834px;font-size:12px;line-height:15px;letter-spacing:-0.542px;">4713.15</span>
<span class="t" style="left:592.10px;top:851px;font-size:12px;line-height:15px;letter-spacing:-0.601px;">Hbeta</span>
<span class="t" style="left:672.10px;top:851px;font-size:12px;line-height:15px;letter-spacing:-0.536px;">4861.363</span>
<span class="t" style="left:592.10px;top:868px;font-size:12px;line-height:15px;letter-spacing:-0.550px;height:7.0px;overflow:hidden;">He I</span>
<span class="t" style="left:672.10px;top:868px;font-size:12px;line-height:15px;letter-spacing:-0.542px;height:7.0px;overflow:hidden;">4921.93</span>
<span class="t" style="left:605.30px;top:914px;font-size:12px;line-height:15px;letter-spacing:-0.938px;">Delete</span>
<span class="t" style="left:740.40px;top:914px;font-size:12px;line-height:15px;letter-spacing:-0.887px;">Clear list</span>
<span class="t" style="left:367.50px;top:960px;font-size:12px;line-height:15px;letter-spacing:-0.912px;">Cancel</span>
<span class="t" style="left:758.30px;top:960px;font-size:12px;line-height:15px;letter-spacing:-1.344px;">OK</span>
</div>
</body></html>
